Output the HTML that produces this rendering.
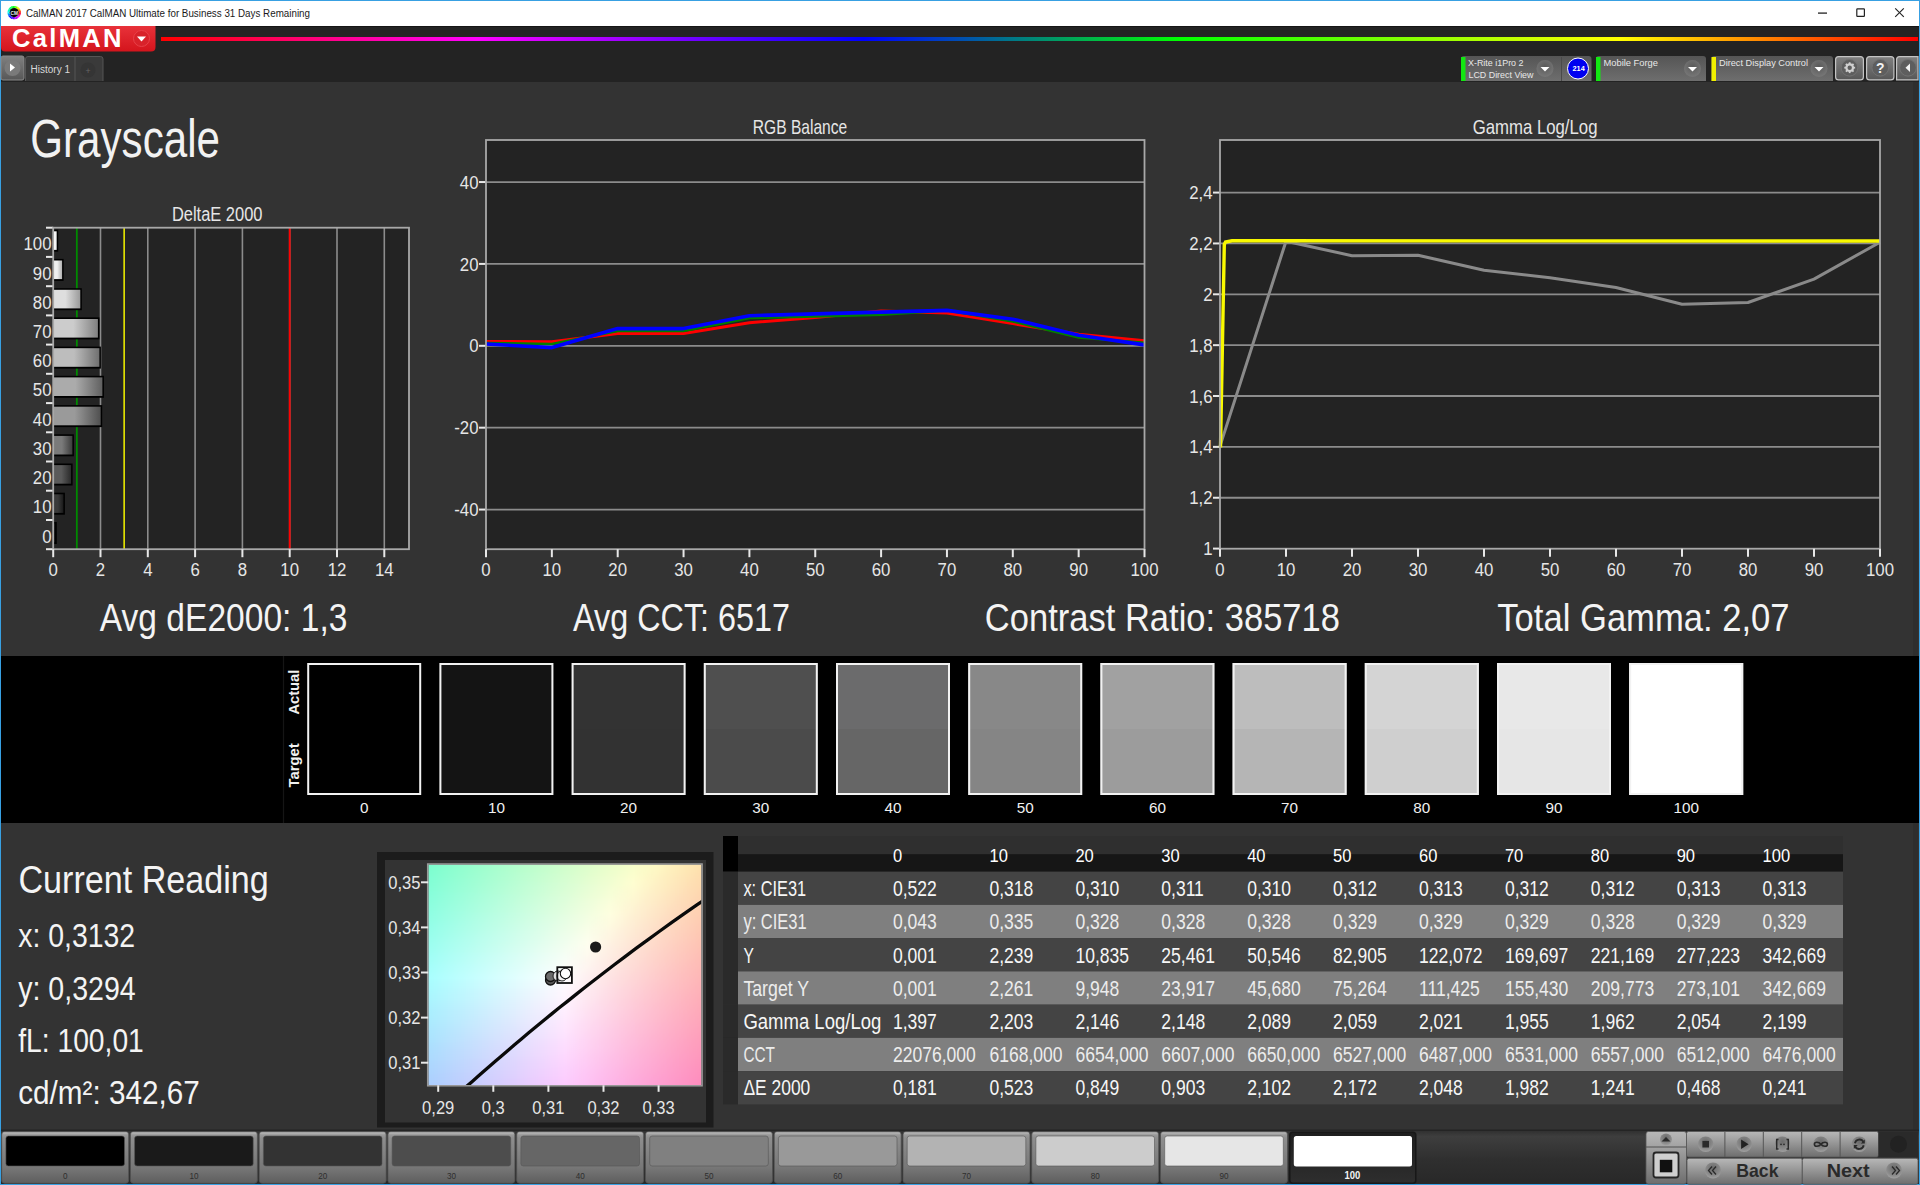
<!DOCTYPE html>
<html><head><meta charset="utf-8"><title>CalMAN Grayscale</title>
<style>
html,body{margin:0;padding:0;width:1920px;height:1185px;overflow:hidden;background:#38a0e2;}
body{position:relative;font-family:"Liberation Sans",sans-serif;}
svg text{font-family:"Liberation Sans",sans-serif;}
.b{position:absolute;box-sizing:border-box;}
</style></head><body>

<svg width="1920" height="1185" viewBox="0 0 1920 1185" style="position:absolute;left:0;top:0">
<defs>
<linearGradient id="rainbow" x1="0" y1="0" x2="1" y2="0">
 <stop offset="0" stop-color="#ff0000"/><stop offset="0.18" stop-color="#ff00ff"/>
 <stop offset="0.40" stop-color="#0000ff"/><stop offset="0.58" stop-color="#00ff00"/>
 <stop offset="0.83" stop-color="#ffff00"/><stop offset="1" stop-color="#ff0000"/>
</linearGradient>
<linearGradient id="redlogo" x1="0" y1="0" x2="0" y2="1">
 <stop offset="0" stop-color="#e8323a"/><stop offset="1" stop-color="#d4141c"/>
</linearGradient>
<linearGradient id="devbox" x1="0" y1="0" x2="0" y2="1">
 <stop offset="0" stop-color="#555"/><stop offset="1" stop-color="#6e6e6e"/>
</linearGradient>
<radialGradient id="ddcirc" cx="0.5" cy="0.4" r="0.6">
 <stop offset="0" stop-color="#5a5a5a"/><stop offset="1" stop-color="#777"/>
</radialGradient>
<linearGradient id="btn" x1="0" y1="0" x2="0" y2="1">
 <stop offset="0" stop-color="#808080"/><stop offset="1" stop-color="#575757"/>
</linearGradient>
<linearGradient id="bbtn" x1="0" y1="0" x2="0" y2="1">
 <stop offset="0" stop-color="#b4b4b4"/><stop offset="0.55" stop-color="#8c8c8c"/><stop offset="1" stop-color="#6a6a6a"/>
</linearGradient>
<linearGradient id="tbtn" x1="0" y1="0" x2="0" y2="1">
 <stop offset="0" stop-color="#b0b0b0"/><stop offset="1" stop-color="#707070"/>
</linearGradient>
<linearGradient id="bar100" x1="0" y1="0" x2="1" y2="0"><stop offset="0" stop-color="#ffffff"/><stop offset="0.45" stop-color="#ffffff"/><stop offset="1" stop-color="#e0e0e0"/></linearGradient><linearGradient id="bar90" x1="0" y1="0" x2="1" y2="0"><stop offset="0" stop-color="#f0f0f0"/><stop offset="0.45" stop-color="#f0f0f0"/><stop offset="1" stop-color="#b0b0b0"/></linearGradient><linearGradient id="bar80" x1="0" y1="0" x2="1" y2="0"><stop offset="0" stop-color="#dedede"/><stop offset="0.45" stop-color="#dedede"/><stop offset="1" stop-color="#9a9a9a"/></linearGradient><linearGradient id="bar70" x1="0" y1="0" x2="1" y2="0"><stop offset="0" stop-color="#cccccc"/><stop offset="0.45" stop-color="#cccccc"/><stop offset="1" stop-color="#808080"/></linearGradient><linearGradient id="bar60" x1="0" y1="0" x2="1" y2="0"><stop offset="0" stop-color="#bdbdbd"/><stop offset="0.45" stop-color="#bdbdbd"/><stop offset="1" stop-color="#707070"/></linearGradient><linearGradient id="bar50" x1="0" y1="0" x2="1" y2="0"><stop offset="0" stop-color="#ababab"/><stop offset="0.45" stop-color="#ababab"/><stop offset="1" stop-color="#606060"/></linearGradient><linearGradient id="bar40" x1="0" y1="0" x2="1" y2="0"><stop offset="0" stop-color="#9a9a9a"/><stop offset="0.45" stop-color="#9a9a9a"/><stop offset="1" stop-color="#505050"/></linearGradient><linearGradient id="bar30" x1="0" y1="0" x2="1" y2="0"><stop offset="0" stop-color="#7a7a7a"/><stop offset="0.45" stop-color="#7a7a7a"/><stop offset="1" stop-color="#3c3c3c"/></linearGradient><linearGradient id="bar20" x1="0" y1="0" x2="1" y2="0"><stop offset="0" stop-color="#5a5a5a"/><stop offset="0.45" stop-color="#5a5a5a"/><stop offset="1" stop-color="#2a2a2a"/></linearGradient><linearGradient id="bar10" x1="0" y1="0" x2="1" y2="0"><stop offset="0" stop-color="#3a3a3a"/><stop offset="0.45" stop-color="#3a3a3a"/><stop offset="1" stop-color="#1a1a1a"/></linearGradient><linearGradient id="bar0" x1="0" y1="0" x2="1" y2="0"><stop offset="0" stop-color="#181818"/><stop offset="0.45" stop-color="#181818"/><stop offset="1" stop-color="#000000"/></linearGradient><linearGradient id="cs0" x1="0" y1="0" x2="1" y2="0"><stop offset="0.000" stop-color="#79fecc"/><stop offset="0.083" stop-color="#87fecb"/><stop offset="0.167" stop-color="#96feca"/><stop offset="0.250" stop-color="#a4feca"/><stop offset="0.333" stop-color="#b2fec9"/><stop offset="0.417" stop-color="#c0fec9"/><stop offset="0.500" stop-color="#cdfec8"/><stop offset="0.583" stop-color="#dafec7"/><stop offset="0.667" stop-color="#e8fec7"/><stop offset="0.750" stop-color="#f5fec6"/><stop offset="0.833" stop-color="#fefcc3"/><stop offset="0.917" stop-color="#feefb7"/><stop offset="1.000" stop-color="#fee4ac"/></linearGradient><linearGradient id="cs1" x1="0" y1="0" x2="1" y2="0"><stop offset="0.000" stop-color="#7afecd"/><stop offset="0.083" stop-color="#89fecd"/><stop offset="0.167" stop-color="#98fecc"/><stop offset="0.250" stop-color="#a6fecc"/><stop offset="0.333" stop-color="#b4fecb"/><stop offset="0.417" stop-color="#c1feca"/><stop offset="0.500" stop-color="#cffeca"/><stop offset="0.583" stop-color="#dcfec9"/><stop offset="0.667" stop-color="#e9fec9"/><stop offset="0.750" stop-color="#f6fec8"/><stop offset="0.833" stop-color="#fefac3"/><stop offset="0.917" stop-color="#feeeb8"/><stop offset="1.000" stop-color="#fee2ac"/></linearGradient><linearGradient id="cs2" x1="0" y1="0" x2="1" y2="0"><stop offset="0.000" stop-color="#7cfecf"/><stop offset="0.083" stop-color="#8bfece"/><stop offset="0.167" stop-color="#99fece"/><stop offset="0.250" stop-color="#a7fecd"/><stop offset="0.333" stop-color="#b5fecd"/><stop offset="0.417" stop-color="#c3fecc"/><stop offset="0.500" stop-color="#d0fecc"/><stop offset="0.583" stop-color="#defecb"/><stop offset="0.667" stop-color="#ebfeca"/><stop offset="0.750" stop-color="#f8feca"/><stop offset="0.833" stop-color="#fef8c4"/><stop offset="0.917" stop-color="#feecb8"/><stop offset="1.000" stop-color="#fee1ad"/></linearGradient><linearGradient id="cs3" x1="0" y1="0" x2="1" y2="0"><stop offset="0.000" stop-color="#7dfed0"/><stop offset="0.083" stop-color="#8cfed0"/><stop offset="0.167" stop-color="#9bfecf"/><stop offset="0.250" stop-color="#a9fecf"/><stop offset="0.333" stop-color="#b7fece"/><stop offset="0.417" stop-color="#c4fece"/><stop offset="0.500" stop-color="#d2fecd"/><stop offset="0.583" stop-color="#dffecd"/><stop offset="0.667" stop-color="#ecfecc"/><stop offset="0.750" stop-color="#f9fecc"/><stop offset="0.833" stop-color="#fef7c4"/><stop offset="0.917" stop-color="#feebb8"/><stop offset="1.000" stop-color="#fedfad"/></linearGradient><linearGradient id="cs4" x1="0" y1="0" x2="1" y2="0"><stop offset="0.000" stop-color="#7ffed2"/><stop offset="0.083" stop-color="#8efed2"/><stop offset="0.167" stop-color="#9cfed1"/><stop offset="0.250" stop-color="#aafed1"/><stop offset="0.333" stop-color="#b8fed0"/><stop offset="0.417" stop-color="#c6fed0"/><stop offset="0.500" stop-color="#d4fecf"/><stop offset="0.583" stop-color="#e1fece"/><stop offset="0.667" stop-color="#eefece"/><stop offset="0.750" stop-color="#fbfecd"/><stop offset="0.833" stop-color="#fef5c4"/><stop offset="0.917" stop-color="#fee9b9"/><stop offset="1.000" stop-color="#feddad"/></linearGradient><linearGradient id="cs5" x1="0" y1="0" x2="1" y2="0"><stop offset="0.000" stop-color="#80fed4"/><stop offset="0.083" stop-color="#8ffed3"/><stop offset="0.167" stop-color="#9efed3"/><stop offset="0.250" stop-color="#acfed2"/><stop offset="0.333" stop-color="#bafed2"/><stop offset="0.417" stop-color="#c8fed1"/><stop offset="0.500" stop-color="#d5fed1"/><stop offset="0.583" stop-color="#e3fed0"/><stop offset="0.667" stop-color="#f0fed0"/><stop offset="0.750" stop-color="#fdfecf"/><stop offset="0.833" stop-color="#fef3c4"/><stop offset="0.917" stop-color="#fee7b9"/><stop offset="1.000" stop-color="#fedcae"/></linearGradient><linearGradient id="cs6" x1="0" y1="0" x2="1" y2="0"><stop offset="0.000" stop-color="#82fed5"/><stop offset="0.083" stop-color="#91fed5"/><stop offset="0.167" stop-color="#9ffed4"/><stop offset="0.250" stop-color="#adfed4"/><stop offset="0.333" stop-color="#bbfed4"/><stop offset="0.417" stop-color="#c9fed3"/><stop offset="0.500" stop-color="#d7fed3"/><stop offset="0.583" stop-color="#e4fed2"/><stop offset="0.667" stop-color="#f1fed2"/><stop offset="0.750" stop-color="#fefed1"/><stop offset="0.833" stop-color="#fef2c5"/><stop offset="0.917" stop-color="#fee6b9"/><stop offset="1.000" stop-color="#fedaae"/></linearGradient><linearGradient id="cs7" x1="0" y1="0" x2="1" y2="0"><stop offset="0.000" stop-color="#83fed7"/><stop offset="0.083" stop-color="#92fed7"/><stop offset="0.167" stop-color="#a1fed6"/><stop offset="0.250" stop-color="#affed6"/><stop offset="0.333" stop-color="#bdfed5"/><stop offset="0.417" stop-color="#cbfed5"/><stop offset="0.500" stop-color="#d8fed4"/><stop offset="0.583" stop-color="#e6fed4"/><stop offset="0.667" stop-color="#f3fed3"/><stop offset="0.750" stop-color="#fefdd1"/><stop offset="0.833" stop-color="#fef0c5"/><stop offset="0.917" stop-color="#fee4b9"/><stop offset="1.000" stop-color="#fed9ae"/></linearGradient><linearGradient id="cs8" x1="0" y1="0" x2="1" y2="0"><stop offset="0.000" stop-color="#85fed9"/><stop offset="0.083" stop-color="#94fed8"/><stop offset="0.167" stop-color="#a2fed8"/><stop offset="0.250" stop-color="#b1fed7"/><stop offset="0.333" stop-color="#bffed7"/><stop offset="0.417" stop-color="#ccfed7"/><stop offset="0.500" stop-color="#dafed6"/><stop offset="0.583" stop-color="#e7fed6"/><stop offset="0.667" stop-color="#f5fed5"/><stop offset="0.750" stop-color="#fefbd2"/><stop offset="0.833" stop-color="#feefc5"/><stop offset="0.917" stop-color="#fee3ba"/><stop offset="1.000" stop-color="#fed7af"/></linearGradient><linearGradient id="cs9" x1="0" y1="0" x2="1" y2="0"><stop offset="0.000" stop-color="#86feda"/><stop offset="0.083" stop-color="#95feda"/><stop offset="0.167" stop-color="#a4feda"/><stop offset="0.250" stop-color="#b2fed9"/><stop offset="0.333" stop-color="#c0fed9"/><stop offset="0.417" stop-color="#cefed8"/><stop offset="0.500" stop-color="#dcfed8"/><stop offset="0.583" stop-color="#e9fed7"/><stop offset="0.667" stop-color="#f6fed7"/><stop offset="0.750" stop-color="#fef9d2"/><stop offset="0.833" stop-color="#feedc6"/><stop offset="0.917" stop-color="#fee1ba"/><stop offset="1.000" stop-color="#fed6af"/></linearGradient><linearGradient id="cs10" x1="0" y1="0" x2="1" y2="0"><stop offset="0.000" stop-color="#88fedc"/><stop offset="0.083" stop-color="#97fedc"/><stop offset="0.167" stop-color="#a6fedb"/><stop offset="0.250" stop-color="#b4fedb"/><stop offset="0.333" stop-color="#c2feda"/><stop offset="0.417" stop-color="#d0feda"/><stop offset="0.500" stop-color="#ddfeda"/><stop offset="0.583" stop-color="#ebfed9"/><stop offset="0.667" stop-color="#f8fed9"/><stop offset="0.750" stop-color="#fef8d2"/><stop offset="0.833" stop-color="#feebc6"/><stop offset="0.917" stop-color="#fedfba"/><stop offset="1.000" stop-color="#fed4af"/></linearGradient><linearGradient id="cs11" x1="0" y1="0" x2="1" y2="0"><stop offset="0.000" stop-color="#8afede"/><stop offset="0.083" stop-color="#98fedd"/><stop offset="0.167" stop-color="#a7fedd"/><stop offset="0.250" stop-color="#b5fedd"/><stop offset="0.333" stop-color="#c4fedc"/><stop offset="0.417" stop-color="#d1fedc"/><stop offset="0.500" stop-color="#dffedb"/><stop offset="0.583" stop-color="#edfedb"/><stop offset="0.667" stop-color="#fafedb"/><stop offset="0.750" stop-color="#fef6d2"/><stop offset="0.833" stop-color="#feeac6"/><stop offset="0.917" stop-color="#fedebb"/><stop offset="1.000" stop-color="#fed3b0"/></linearGradient><linearGradient id="cs12" x1="0" y1="0" x2="1" y2="0"><stop offset="0.000" stop-color="#8bfedf"/><stop offset="0.083" stop-color="#9afedf"/><stop offset="0.167" stop-color="#a9fedf"/><stop offset="0.250" stop-color="#b7fede"/><stop offset="0.333" stop-color="#c5fede"/><stop offset="0.417" stop-color="#d3fede"/><stop offset="0.500" stop-color="#e1fedd"/><stop offset="0.583" stop-color="#eefedd"/><stop offset="0.667" stop-color="#fcfedc"/><stop offset="0.750" stop-color="#fef4d3"/><stop offset="0.833" stop-color="#fee8c7"/><stop offset="0.917" stop-color="#fedcbb"/><stop offset="1.000" stop-color="#fed1b0"/></linearGradient><linearGradient id="cs13" x1="0" y1="0" x2="1" y2="0"><stop offset="0.000" stop-color="#8dfee1"/><stop offset="0.083" stop-color="#9cfee1"/><stop offset="0.167" stop-color="#aafee0"/><stop offset="0.250" stop-color="#b9fee0"/><stop offset="0.333" stop-color="#c7fee0"/><stop offset="0.417" stop-color="#d5fedf"/><stop offset="0.500" stop-color="#e2fedf"/><stop offset="0.583" stop-color="#f0fedf"/><stop offset="0.667" stop-color="#fdfede"/><stop offset="0.750" stop-color="#fef3d3"/><stop offset="0.833" stop-color="#fee6c7"/><stop offset="0.917" stop-color="#fedbbb"/><stop offset="1.000" stop-color="#fecfb1"/></linearGradient><linearGradient id="cs14" x1="0" y1="0" x2="1" y2="0"><stop offset="0.000" stop-color="#8efee3"/><stop offset="0.083" stop-color="#9dfee2"/><stop offset="0.167" stop-color="#acfee2"/><stop offset="0.250" stop-color="#bafee2"/><stop offset="0.333" stop-color="#c8fee2"/><stop offset="0.417" stop-color="#d6fee1"/><stop offset="0.500" stop-color="#e4fee1"/><stop offset="0.583" stop-color="#f2fee1"/><stop offset="0.667" stop-color="#fefee0"/><stop offset="0.750" stop-color="#fef1d3"/><stop offset="0.833" stop-color="#fee5c7"/><stop offset="0.917" stop-color="#fed9bc"/><stop offset="1.000" stop-color="#feceb1"/></linearGradient><linearGradient id="cs15" x1="0" y1="0" x2="1" y2="0"><stop offset="0.000" stop-color="#90fee4"/><stop offset="0.083" stop-color="#9ffee4"/><stop offset="0.167" stop-color="#aefee4"/><stop offset="0.250" stop-color="#bcfee4"/><stop offset="0.333" stop-color="#cafee3"/><stop offset="0.417" stop-color="#d8fee3"/><stop offset="0.500" stop-color="#e6fee3"/><stop offset="0.583" stop-color="#f3fee2"/><stop offset="0.667" stop-color="#fefce0"/><stop offset="0.750" stop-color="#feefd3"/><stop offset="0.833" stop-color="#fee3c7"/><stop offset="0.917" stop-color="#fed7bc"/><stop offset="1.000" stop-color="#feccb1"/></linearGradient><linearGradient id="cs16" x1="0" y1="0" x2="1" y2="0"><stop offset="0.000" stop-color="#91fee6"/><stop offset="0.083" stop-color="#a0fee6"/><stop offset="0.167" stop-color="#affee6"/><stop offset="0.250" stop-color="#befee5"/><stop offset="0.333" stop-color="#ccfee5"/><stop offset="0.417" stop-color="#dafee5"/><stop offset="0.500" stop-color="#e7fee5"/><stop offset="0.583" stop-color="#f5fee4"/><stop offset="0.667" stop-color="#fefbe0"/><stop offset="0.750" stop-color="#feeed4"/><stop offset="0.833" stop-color="#fee1c8"/><stop offset="0.917" stop-color="#fed6bc"/><stop offset="1.000" stop-color="#fecbb2"/></linearGradient><linearGradient id="cs17" x1="0" y1="0" x2="1" y2="0"><stop offset="0.000" stop-color="#93fee8"/><stop offset="0.083" stop-color="#a2fee8"/><stop offset="0.167" stop-color="#b1fee7"/><stop offset="0.250" stop-color="#bffee7"/><stop offset="0.333" stop-color="#cdfee7"/><stop offset="0.417" stop-color="#dbfee7"/><stop offset="0.500" stop-color="#e9fee6"/><stop offset="0.583" stop-color="#f7fee6"/><stop offset="0.667" stop-color="#fef9e0"/><stop offset="0.750" stop-color="#feecd4"/><stop offset="0.833" stop-color="#fee0c8"/><stop offset="0.917" stop-color="#fed4bd"/><stop offset="1.000" stop-color="#fec9b2"/></linearGradient><linearGradient id="cs18" x1="0" y1="0" x2="1" y2="0"><stop offset="0.000" stop-color="#95feea"/><stop offset="0.083" stop-color="#a4fee9"/><stop offset="0.167" stop-color="#b2fee9"/><stop offset="0.250" stop-color="#c1fee9"/><stop offset="0.333" stop-color="#cffee9"/><stop offset="0.417" stop-color="#ddfee9"/><stop offset="0.500" stop-color="#ebfee8"/><stop offset="0.583" stop-color="#f9fee8"/><stop offset="0.667" stop-color="#fef7e1"/><stop offset="0.750" stop-color="#feead4"/><stop offset="0.833" stop-color="#fedec8"/><stop offset="0.917" stop-color="#fed3bd"/><stop offset="1.000" stop-color="#fec8b2"/></linearGradient><linearGradient id="cs19" x1="0" y1="0" x2="1" y2="0"><stop offset="0.000" stop-color="#96feeb"/><stop offset="0.083" stop-color="#a5feeb"/><stop offset="0.167" stop-color="#b4feeb"/><stop offset="0.250" stop-color="#c3feeb"/><stop offset="0.333" stop-color="#d1feeb"/><stop offset="0.417" stop-color="#dffeea"/><stop offset="0.500" stop-color="#edfeea"/><stop offset="0.583" stop-color="#fafeea"/><stop offset="0.667" stop-color="#fef5e1"/><stop offset="0.750" stop-color="#fee9d4"/><stop offset="0.833" stop-color="#feddc9"/><stop offset="0.917" stop-color="#fed1bd"/><stop offset="1.000" stop-color="#fec6b2"/></linearGradient><linearGradient id="cs20" x1="0" y1="0" x2="1" y2="0"><stop offset="0.000" stop-color="#98feed"/><stop offset="0.083" stop-color="#a7feed"/><stop offset="0.167" stop-color="#b6feed"/><stop offset="0.250" stop-color="#c4feed"/><stop offset="0.333" stop-color="#d2feec"/><stop offset="0.417" stop-color="#e0feec"/><stop offset="0.500" stop-color="#eefeec"/><stop offset="0.583" stop-color="#fcfeec"/><stop offset="0.667" stop-color="#fef4e1"/><stop offset="0.750" stop-color="#fee7d5"/><stop offset="0.833" stop-color="#fedbc9"/><stop offset="0.917" stop-color="#fed0be"/><stop offset="1.000" stop-color="#fec5b3"/></linearGradient><linearGradient id="cs21" x1="0" y1="0" x2="1" y2="0"><stop offset="0.000" stop-color="#9afeef"/><stop offset="0.083" stop-color="#a9feef"/><stop offset="0.167" stop-color="#b7feef"/><stop offset="0.250" stop-color="#c6feee"/><stop offset="0.333" stop-color="#d4feee"/><stop offset="0.417" stop-color="#e2feee"/><stop offset="0.500" stop-color="#f0feee"/><stop offset="0.583" stop-color="#fefeee"/><stop offset="0.667" stop-color="#fef2e1"/><stop offset="0.750" stop-color="#fee5d5"/><stop offset="0.833" stop-color="#fed9c9"/><stop offset="0.917" stop-color="#fecebe"/><stop offset="1.000" stop-color="#fec3b3"/></linearGradient><linearGradient id="cs22" x1="0" y1="0" x2="1" y2="0"><stop offset="0.000" stop-color="#9bfef1"/><stop offset="0.083" stop-color="#aafef1"/><stop offset="0.167" stop-color="#b9fef0"/><stop offset="0.250" stop-color="#c8fef0"/><stop offset="0.333" stop-color="#d6fef0"/><stop offset="0.417" stop-color="#e4fef0"/><stop offset="0.500" stop-color="#f2fef0"/><stop offset="0.583" stop-color="#fefdef"/><stop offset="0.667" stop-color="#fef0e2"/><stop offset="0.750" stop-color="#fee4d5"/><stop offset="0.833" stop-color="#fed8c9"/><stop offset="0.917" stop-color="#feccbe"/><stop offset="1.000" stop-color="#fec2b3"/></linearGradient><linearGradient id="cs23" x1="0" y1="0" x2="1" y2="0"><stop offset="0.000" stop-color="#9dfef2"/><stop offset="0.083" stop-color="#acfef2"/><stop offset="0.167" stop-color="#bbfef2"/><stop offset="0.250" stop-color="#c9fef2"/><stop offset="0.333" stop-color="#d8fef2"/><stop offset="0.417" stop-color="#e6fef2"/><stop offset="0.500" stop-color="#f4fef2"/><stop offset="0.583" stop-color="#fefcef"/><stop offset="0.667" stop-color="#feeee2"/><stop offset="0.750" stop-color="#fee2d5"/><stop offset="0.833" stop-color="#fed6ca"/><stop offset="0.917" stop-color="#fecbbe"/><stop offset="1.000" stop-color="#fec0b4"/></linearGradient><linearGradient id="cs24" x1="0" y1="0" x2="1" y2="0"><stop offset="0.000" stop-color="#9efef4"/><stop offset="0.083" stop-color="#aefef4"/><stop offset="0.167" stop-color="#bcfef4"/><stop offset="0.250" stop-color="#cbfef4"/><stop offset="0.333" stop-color="#d9fef4"/><stop offset="0.417" stop-color="#e7fef4"/><stop offset="0.500" stop-color="#f5fef4"/><stop offset="0.583" stop-color="#fefaef"/><stop offset="0.667" stop-color="#feede2"/><stop offset="0.750" stop-color="#fee0d6"/><stop offset="0.833" stop-color="#fed4ca"/><stop offset="0.917" stop-color="#fec9bf"/><stop offset="1.000" stop-color="#febeb4"/></linearGradient><linearGradient id="cs25" x1="0" y1="0" x2="1" y2="0"><stop offset="0.000" stop-color="#a0fef6"/><stop offset="0.083" stop-color="#affef6"/><stop offset="0.167" stop-color="#befef6"/><stop offset="0.250" stop-color="#cdfef6"/><stop offset="0.333" stop-color="#dbfef6"/><stop offset="0.417" stop-color="#e9fef6"/><stop offset="0.500" stop-color="#f7fef6"/><stop offset="0.583" stop-color="#fef8ef"/><stop offset="0.667" stop-color="#feebe2"/><stop offset="0.750" stop-color="#fedfd6"/><stop offset="0.833" stop-color="#fed3ca"/><stop offset="0.917" stop-color="#fec8bf"/><stop offset="1.000" stop-color="#febdb4"/></linearGradient><linearGradient id="cs26" x1="0" y1="0" x2="1" y2="0"><stop offset="0.000" stop-color="#a2fef8"/><stop offset="0.083" stop-color="#b1fef8"/><stop offset="0.167" stop-color="#c0fef8"/><stop offset="0.250" stop-color="#cefef8"/><stop offset="0.333" stop-color="#ddfef8"/><stop offset="0.417" stop-color="#ebfef7"/><stop offset="0.500" stop-color="#f9fef7"/><stop offset="0.583" stop-color="#fef6ef"/><stop offset="0.667" stop-color="#fee9e2"/><stop offset="0.750" stop-color="#feddd6"/><stop offset="0.833" stop-color="#fed1ca"/><stop offset="0.917" stop-color="#fec6bf"/><stop offset="1.000" stop-color="#febbb5"/></linearGradient><linearGradient id="cs27" x1="0" y1="0" x2="1" y2="0"><stop offset="0.000" stop-color="#a3fefa"/><stop offset="0.083" stop-color="#b3fefa"/><stop offset="0.167" stop-color="#c1fefa"/><stop offset="0.250" stop-color="#d0fef9"/><stop offset="0.333" stop-color="#defef9"/><stop offset="0.417" stop-color="#edfef9"/><stop offset="0.500" stop-color="#fbfef9"/><stop offset="0.583" stop-color="#fef5f0"/><stop offset="0.667" stop-color="#fee8e3"/><stop offset="0.750" stop-color="#fedbd6"/><stop offset="0.833" stop-color="#fed0cb"/><stop offset="0.917" stop-color="#fec4c0"/><stop offset="1.000" stop-color="#febab5"/></linearGradient><linearGradient id="cs28" x1="0" y1="0" x2="1" y2="0"><stop offset="0.000" stop-color="#a5fefb"/><stop offset="0.083" stop-color="#b4fefb"/><stop offset="0.167" stop-color="#c3fefb"/><stop offset="0.250" stop-color="#d2fefb"/><stop offset="0.333" stop-color="#e0fefb"/><stop offset="0.417" stop-color="#eefefb"/><stop offset="0.500" stop-color="#fcfefb"/><stop offset="0.583" stop-color="#fef3f0"/><stop offset="0.667" stop-color="#fee6e3"/><stop offset="0.750" stop-color="#fedad7"/><stop offset="0.833" stop-color="#fececb"/><stop offset="0.917" stop-color="#fec3c0"/><stop offset="1.000" stop-color="#feb8b5"/></linearGradient><linearGradient id="cs29" x1="0" y1="0" x2="1" y2="0"><stop offset="0.000" stop-color="#a7fefd"/><stop offset="0.083" stop-color="#b6fefd"/><stop offset="0.167" stop-color="#c5fefd"/><stop offset="0.250" stop-color="#d4fefd"/><stop offset="0.333" stop-color="#e2fefd"/><stop offset="0.417" stop-color="#f0fefd"/><stop offset="0.500" stop-color="#fefefd"/><stop offset="0.583" stop-color="#fef1f0"/><stop offset="0.667" stop-color="#fee4e3"/><stop offset="0.750" stop-color="#fed8d7"/><stop offset="0.833" stop-color="#fecccb"/><stop offset="0.917" stop-color="#fec1c0"/><stop offset="1.000" stop-color="#feb7b6"/></linearGradient><linearGradient id="cs30" x1="0" y1="0" x2="1" y2="0"><stop offset="0.000" stop-color="#a8fefe"/><stop offset="0.083" stop-color="#b7fefe"/><stop offset="0.167" stop-color="#c6fefe"/><stop offset="0.250" stop-color="#d5fefe"/><stop offset="0.333" stop-color="#e3fefe"/><stop offset="0.417" stop-color="#f1fefe"/><stop offset="0.500" stop-color="#fefdfe"/><stop offset="0.583" stop-color="#feeff0"/><stop offset="0.667" stop-color="#fee2e3"/><stop offset="0.750" stop-color="#fed6d7"/><stop offset="0.833" stop-color="#fecbcc"/><stop offset="0.917" stop-color="#fec0c1"/><stop offset="1.000" stop-color="#feb5b6"/></linearGradient><linearGradient id="cs31" x1="0" y1="0" x2="1" y2="0"><stop offset="0.000" stop-color="#a8fcfe"/><stop offset="0.083" stop-color="#b7fcfe"/><stop offset="0.167" stop-color="#c6fcfe"/><stop offset="0.250" stop-color="#d5fcfe"/><stop offset="0.333" stop-color="#e3fcfe"/><stop offset="0.417" stop-color="#f1fcfe"/><stop offset="0.500" stop-color="#fefbfe"/><stop offset="0.583" stop-color="#feeef0"/><stop offset="0.667" stop-color="#fee1e3"/><stop offset="0.750" stop-color="#fed5d7"/><stop offset="0.833" stop-color="#fec9cc"/><stop offset="0.917" stop-color="#febec1"/><stop offset="1.000" stop-color="#feb4b6"/></linearGradient><linearGradient id="cs32" x1="0" y1="0" x2="1" y2="0"><stop offset="0.000" stop-color="#a8fafe"/><stop offset="0.083" stop-color="#b7fafe"/><stop offset="0.167" stop-color="#c6fafe"/><stop offset="0.250" stop-color="#d5fafe"/><stop offset="0.333" stop-color="#e3fafe"/><stop offset="0.417" stop-color="#f1fafe"/><stop offset="0.500" stop-color="#fef9fe"/><stop offset="0.583" stop-color="#feecf0"/><stop offset="0.667" stop-color="#fedfe4"/><stop offset="0.750" stop-color="#fed3d8"/><stop offset="0.833" stop-color="#fec7cc"/><stop offset="0.917" stop-color="#febdc1"/><stop offset="1.000" stop-color="#feb2b7"/></linearGradient><linearGradient id="cs33" x1="0" y1="0" x2="1" y2="0"><stop offset="0.000" stop-color="#a8f9fe"/><stop offset="0.083" stop-color="#b7f8fe"/><stop offset="0.167" stop-color="#c6f8fe"/><stop offset="0.250" stop-color="#d5f8fe"/><stop offset="0.333" stop-color="#e3f8fe"/><stop offset="0.417" stop-color="#f1f8fe"/><stop offset="0.500" stop-color="#fef7fe"/><stop offset="0.583" stop-color="#feeaf1"/><stop offset="0.667" stop-color="#fedde4"/><stop offset="0.750" stop-color="#fed1d8"/><stop offset="0.833" stop-color="#fec6cc"/><stop offset="0.917" stop-color="#febbc1"/><stop offset="1.000" stop-color="#feb1b7"/></linearGradient><linearGradient id="cs34" x1="0" y1="0" x2="1" y2="0"><stop offset="0.000" stop-color="#a9f7fe"/><stop offset="0.083" stop-color="#b8f7fe"/><stop offset="0.167" stop-color="#c6f6fe"/><stop offset="0.250" stop-color="#d5f6fe"/><stop offset="0.333" stop-color="#e3f6fe"/><stop offset="0.417" stop-color="#f1f6fe"/><stop offset="0.500" stop-color="#fef6fe"/><stop offset="0.583" stop-color="#fee8f1"/><stop offset="0.667" stop-color="#fedce4"/><stop offset="0.750" stop-color="#fed0d8"/><stop offset="0.833" stop-color="#fec4cd"/><stop offset="0.917" stop-color="#feb9c2"/><stop offset="1.000" stop-color="#feafb7"/></linearGradient><linearGradient id="cs35" x1="0" y1="0" x2="1" y2="0"><stop offset="0.000" stop-color="#a9f5fe"/><stop offset="0.083" stop-color="#b8f5fe"/><stop offset="0.167" stop-color="#c6f5fe"/><stop offset="0.250" stop-color="#d5f4fe"/><stop offset="0.333" stop-color="#e3f4fe"/><stop offset="0.417" stop-color="#f1f4fe"/><stop offset="0.500" stop-color="#fef4fe"/><stop offset="0.583" stop-color="#fee7f1"/><stop offset="0.667" stop-color="#fedae4"/><stop offset="0.750" stop-color="#feced8"/><stop offset="0.833" stop-color="#fec3cd"/><stop offset="0.917" stop-color="#feb8c2"/><stop offset="1.000" stop-color="#feadb7"/></linearGradient><linearGradient id="cs36" x1="0" y1="0" x2="1" y2="0"><stop offset="0.000" stop-color="#a9f3fe"/><stop offset="0.083" stop-color="#b8f3fe"/><stop offset="0.167" stop-color="#c6f3fe"/><stop offset="0.250" stop-color="#d5f3fe"/><stop offset="0.333" stop-color="#e3f2fe"/><stop offset="0.417" stop-color="#f1f2fe"/><stop offset="0.500" stop-color="#fef2fe"/><stop offset="0.583" stop-color="#fee5f1"/><stop offset="0.667" stop-color="#fed8e4"/><stop offset="0.750" stop-color="#feccd8"/><stop offset="0.833" stop-color="#fec1cd"/><stop offset="0.917" stop-color="#feb6c2"/><stop offset="1.000" stop-color="#feacb8"/></linearGradient><linearGradient id="cs37" x1="0" y1="0" x2="1" y2="0"><stop offset="0.000" stop-color="#a9f1fe"/><stop offset="0.083" stop-color="#b8f1fe"/><stop offset="0.167" stop-color="#c6f1fe"/><stop offset="0.250" stop-color="#d5f1fe"/><stop offset="0.333" stop-color="#e3f1fe"/><stop offset="0.417" stop-color="#f1f0fe"/><stop offset="0.500" stop-color="#fef0fe"/><stop offset="0.583" stop-color="#fee3f1"/><stop offset="0.667" stop-color="#fed7e5"/><stop offset="0.750" stop-color="#fecbd9"/><stop offset="0.833" stop-color="#febfcd"/><stop offset="0.917" stop-color="#feb5c2"/><stop offset="1.000" stop-color="#feaab8"/></linearGradient><linearGradient id="cs38" x1="0" y1="0" x2="1" y2="0"><stop offset="0.000" stop-color="#a9effe"/><stop offset="0.083" stop-color="#b8effe"/><stop offset="0.167" stop-color="#c6effe"/><stop offset="0.250" stop-color="#d5effe"/><stop offset="0.333" stop-color="#e3effe"/><stop offset="0.417" stop-color="#f1eefe"/><stop offset="0.500" stop-color="#feeefe"/><stop offset="0.583" stop-color="#fee1f1"/><stop offset="0.667" stop-color="#fed5e5"/><stop offset="0.750" stop-color="#fec9d9"/><stop offset="0.833" stop-color="#febece"/><stop offset="0.917" stop-color="#feb3c3"/><stop offset="1.000" stop-color="#fea9b8"/></linearGradient><linearGradient id="cs39" x1="0" y1="0" x2="1" y2="0"><stop offset="0.000" stop-color="#a9eefe"/><stop offset="0.083" stop-color="#b8edfe"/><stop offset="0.167" stop-color="#c6edfe"/><stop offset="0.250" stop-color="#d5edfe"/><stop offset="0.333" stop-color="#e3edfe"/><stop offset="0.417" stop-color="#f0ecfe"/><stop offset="0.500" stop-color="#feecfe"/><stop offset="0.583" stop-color="#fee0f2"/><stop offset="0.667" stop-color="#fed3e5"/><stop offset="0.750" stop-color="#fec7d9"/><stop offset="0.833" stop-color="#febcce"/><stop offset="0.917" stop-color="#feb1c3"/><stop offset="1.000" stop-color="#fea7b9"/></linearGradient><linearGradient id="cs40" x1="0" y1="0" x2="1" y2="0"><stop offset="0.000" stop-color="#a9ecfe"/><stop offset="0.083" stop-color="#b8ecfe"/><stop offset="0.167" stop-color="#c6ebfe"/><stop offset="0.250" stop-color="#d5ebfe"/><stop offset="0.333" stop-color="#e3ebfe"/><stop offset="0.417" stop-color="#f0ebfe"/><stop offset="0.500" stop-color="#feeafe"/><stop offset="0.583" stop-color="#fedef2"/><stop offset="0.667" stop-color="#fed1e5"/><stop offset="0.750" stop-color="#fec6d9"/><stop offset="0.833" stop-color="#febbce"/><stop offset="0.917" stop-color="#feb0c3"/><stop offset="1.000" stop-color="#fea6b9"/></linearGradient><linearGradient id="cs41" x1="0" y1="0" x2="1" y2="0"><stop offset="0.000" stop-color="#aaeafe"/><stop offset="0.083" stop-color="#b8eafe"/><stop offset="0.167" stop-color="#c7eafe"/><stop offset="0.250" stop-color="#d5e9fe"/><stop offset="0.333" stop-color="#e3e9fe"/><stop offset="0.417" stop-color="#f0e9fe"/><stop offset="0.500" stop-color="#fee8fe"/><stop offset="0.583" stop-color="#fedcf2"/><stop offset="0.667" stop-color="#fed0e5"/><stop offset="0.750" stop-color="#fec4da"/><stop offset="0.833" stop-color="#feb9ce"/><stop offset="0.917" stop-color="#feaec4"/><stop offset="1.000" stop-color="#fea4b9"/></linearGradient><linearGradient id="cs42" x1="0" y1="0" x2="1" y2="0"><stop offset="0.000" stop-color="#aae8fe"/><stop offset="0.083" stop-color="#b8e8fe"/><stop offset="0.167" stop-color="#c7e8fe"/><stop offset="0.250" stop-color="#d5e7fe"/><stop offset="0.333" stop-color="#e2e7fe"/><stop offset="0.417" stop-color="#f0e7fe"/><stop offset="0.500" stop-color="#fee6fe"/><stop offset="0.583" stop-color="#fedaf2"/><stop offset="0.667" stop-color="#fecee6"/><stop offset="0.750" stop-color="#fec2da"/><stop offset="0.833" stop-color="#feb7cf"/><stop offset="0.917" stop-color="#feadc4"/><stop offset="1.000" stop-color="#fea3ba"/></linearGradient><linearGradient id="cs43" x1="0" y1="0" x2="1" y2="0"><stop offset="0.000" stop-color="#aae6fe"/><stop offset="0.083" stop-color="#b8e6fe"/><stop offset="0.167" stop-color="#c7e6fe"/><stop offset="0.250" stop-color="#d5e6fe"/><stop offset="0.333" stop-color="#e2e5fe"/><stop offset="0.417" stop-color="#f0e5fe"/><stop offset="0.500" stop-color="#fee5fe"/><stop offset="0.583" stop-color="#fed9f2"/><stop offset="0.667" stop-color="#fecce6"/><stop offset="0.750" stop-color="#fec1da"/><stop offset="0.833" stop-color="#feb6cf"/><stop offset="0.917" stop-color="#feabc4"/><stop offset="1.000" stop-color="#fea1ba"/></linearGradient><linearGradient id="cs44" x1="0" y1="0" x2="1" y2="0"><stop offset="0.000" stop-color="#aae5fe"/><stop offset="0.083" stop-color="#b8e4fe"/><stop offset="0.167" stop-color="#c7e4fe"/><stop offset="0.250" stop-color="#d5e4fe"/><stop offset="0.333" stop-color="#e2e3fe"/><stop offset="0.417" stop-color="#f0e3fe"/><stop offset="0.500" stop-color="#fde3fe"/><stop offset="0.583" stop-color="#fed7f2"/><stop offset="0.667" stop-color="#fecbe6"/><stop offset="0.750" stop-color="#febfda"/><stop offset="0.833" stop-color="#feb4cf"/><stop offset="0.917" stop-color="#feaac4"/><stop offset="1.000" stop-color="#fe9fba"/></linearGradient><linearGradient id="cs45" x1="0" y1="0" x2="1" y2="0"><stop offset="0.000" stop-color="#aae3fe"/><stop offset="0.083" stop-color="#b9e3fe"/><stop offset="0.167" stop-color="#c7e2fe"/><stop offset="0.250" stop-color="#d5e2fe"/><stop offset="0.333" stop-color="#e2e1fe"/><stop offset="0.417" stop-color="#f0e1fe"/><stop offset="0.500" stop-color="#fde1fe"/><stop offset="0.583" stop-color="#fed5f3"/><stop offset="0.667" stop-color="#fec9e6"/><stop offset="0.750" stop-color="#febddb"/><stop offset="0.833" stop-color="#feb2cf"/><stop offset="0.917" stop-color="#fea8c5"/><stop offset="1.000" stop-color="#fe9eba"/></linearGradient><linearGradient id="cs46" x1="0" y1="0" x2="1" y2="0"><stop offset="0.000" stop-color="#aae1fe"/><stop offset="0.083" stop-color="#b9e1fe"/><stop offset="0.167" stop-color="#c7e0fe"/><stop offset="0.250" stop-color="#d5e0fe"/><stop offset="0.333" stop-color="#e2e0fe"/><stop offset="0.417" stop-color="#f0dffe"/><stop offset="0.500" stop-color="#fddffe"/><stop offset="0.583" stop-color="#fed3f3"/><stop offset="0.667" stop-color="#fec7e6"/><stop offset="0.750" stop-color="#febcdb"/><stop offset="0.833" stop-color="#feb1d0"/><stop offset="0.917" stop-color="#fea6c5"/><stop offset="1.000" stop-color="#fe9cbb"/></linearGradient><linearGradient id="cs47" x1="0" y1="0" x2="1" y2="0"><stop offset="0.000" stop-color="#aadffe"/><stop offset="0.083" stop-color="#b9dffe"/><stop offset="0.167" stop-color="#c7dffe"/><stop offset="0.250" stop-color="#d5defe"/><stop offset="0.333" stop-color="#e2defe"/><stop offset="0.417" stop-color="#f0ddfe"/><stop offset="0.500" stop-color="#fdddfe"/><stop offset="0.583" stop-color="#fed2f3"/><stop offset="0.667" stop-color="#fec6e7"/><stop offset="0.750" stop-color="#febadb"/><stop offset="0.833" stop-color="#feafd0"/><stop offset="0.917" stop-color="#fea5c5"/><stop offset="1.000" stop-color="#fe9bbb"/></linearGradient><linearGradient id="cs48" x1="0" y1="0" x2="1" y2="0"><stop offset="0.000" stop-color="#aadefe"/><stop offset="0.083" stop-color="#b9ddfe"/><stop offset="0.167" stop-color="#c7ddfe"/><stop offset="0.250" stop-color="#d5dcfe"/><stop offset="0.333" stop-color="#e2dcfe"/><stop offset="0.417" stop-color="#f0dbfe"/><stop offset="0.500" stop-color="#fddbfe"/><stop offset="0.583" stop-color="#fed0f3"/><stop offset="0.667" stop-color="#fec4e7"/><stop offset="0.750" stop-color="#feb8db"/><stop offset="0.833" stop-color="#feaed0"/><stop offset="0.917" stop-color="#fea3c5"/><stop offset="1.000" stop-color="#fe99bb"/></linearGradient><linearGradient id="cs49" x1="0" y1="0" x2="1" y2="0"><stop offset="0.000" stop-color="#abdcfe"/><stop offset="0.083" stop-color="#b9dbfe"/><stop offset="0.167" stop-color="#c7dbfe"/><stop offset="0.250" stop-color="#d5dafe"/><stop offset="0.333" stop-color="#e2dafe"/><stop offset="0.417" stop-color="#f0dafe"/><stop offset="0.500" stop-color="#fdd9fe"/><stop offset="0.583" stop-color="#fecef3"/><stop offset="0.667" stop-color="#fec2e7"/><stop offset="0.750" stop-color="#feb7db"/><stop offset="0.833" stop-color="#feacd0"/><stop offset="0.917" stop-color="#fea2c6"/><stop offset="1.000" stop-color="#fe98bc"/></linearGradient><linearGradient id="cs50" x1="0" y1="0" x2="1" y2="0"><stop offset="0.000" stop-color="#abdafe"/><stop offset="0.083" stop-color="#b9dafe"/><stop offset="0.167" stop-color="#c7d9fe"/><stop offset="0.250" stop-color="#d5d9fe"/><stop offset="0.333" stop-color="#e2d8fe"/><stop offset="0.417" stop-color="#efd8fe"/><stop offset="0.500" stop-color="#fdd7fe"/><stop offset="0.583" stop-color="#feccf3"/><stop offset="0.667" stop-color="#fec0e7"/><stop offset="0.750" stop-color="#feb5dc"/><stop offset="0.833" stop-color="#feaad1"/><stop offset="0.917" stop-color="#fea0c6"/><stop offset="1.000" stop-color="#fe96bc"/></linearGradient><linearGradient id="cs51" x1="0" y1="0" x2="1" y2="0"><stop offset="0.000" stop-color="#abd8fe"/><stop offset="0.083" stop-color="#b9d8fe"/><stop offset="0.167" stop-color="#c7d7fe"/><stop offset="0.250" stop-color="#d5d7fe"/><stop offset="0.333" stop-color="#e2d6fe"/><stop offset="0.417" stop-color="#efd6fe"/><stop offset="0.500" stop-color="#fdd5fe"/><stop offset="0.583" stop-color="#fecbf4"/><stop offset="0.667" stop-color="#febfe7"/><stop offset="0.750" stop-color="#feb4dc"/><stop offset="0.833" stop-color="#fea9d1"/><stop offset="0.917" stop-color="#fe9ec6"/><stop offset="1.000" stop-color="#fe95bc"/></linearGradient><linearGradient id="cs52" x1="0" y1="0" x2="1" y2="0"><stop offset="0.000" stop-color="#abd6fe"/><stop offset="0.083" stop-color="#b9d6fe"/><stop offset="0.167" stop-color="#c7d5fe"/><stop offset="0.250" stop-color="#d5d5fe"/><stop offset="0.333" stop-color="#e2d4fe"/><stop offset="0.417" stop-color="#efd4fe"/><stop offset="0.500" stop-color="#fcd3fe"/><stop offset="0.583" stop-color="#fec9f4"/><stop offset="0.667" stop-color="#febde8"/><stop offset="0.750" stop-color="#feb2dc"/><stop offset="0.833" stop-color="#fea7d1"/><stop offset="0.917" stop-color="#fe9dc6"/><stop offset="1.000" stop-color="#fe93bc"/></linearGradient><linearGradient id="cs53" x1="0" y1="0" x2="1" y2="0"><stop offset="0.000" stop-color="#abd5fe"/><stop offset="0.083" stop-color="#b9d4fe"/><stop offset="0.167" stop-color="#c7d4fe"/><stop offset="0.250" stop-color="#d5d3fe"/><stop offset="0.333" stop-color="#e2d3fe"/><stop offset="0.417" stop-color="#efd2fe"/><stop offset="0.500" stop-color="#fcd1fe"/><stop offset="0.583" stop-color="#fec7f4"/><stop offset="0.667" stop-color="#febbe8"/><stop offset="0.750" stop-color="#feb0dc"/><stop offset="0.833" stop-color="#fea6d1"/><stop offset="0.917" stop-color="#fe9bc7"/><stop offset="1.000" stop-color="#fe91bd"/></linearGradient><linearGradient id="cs54" x1="0" y1="0" x2="1" y2="0"><stop offset="0.000" stop-color="#abd3fe"/><stop offset="0.083" stop-color="#b9d2fe"/><stop offset="0.167" stop-color="#c7d2fe"/><stop offset="0.250" stop-color="#d5d1fe"/><stop offset="0.333" stop-color="#e2d1fe"/><stop offset="0.417" stop-color="#efd0fe"/><stop offset="0.500" stop-color="#fcd0fe"/><stop offset="0.583" stop-color="#fec5f4"/><stop offset="0.667" stop-color="#febae8"/><stop offset="0.750" stop-color="#feafdc"/><stop offset="0.833" stop-color="#fea4d1"/><stop offset="0.917" stop-color="#fe9ac7"/><stop offset="1.000" stop-color="#fe90bd"/></linearGradient><linearGradient id="cs55" x1="0" y1="0" x2="1" y2="0"><stop offset="0.000" stop-color="#abd1fe"/><stop offset="0.083" stop-color="#b9d1fe"/><stop offset="0.167" stop-color="#c7d0fe"/><stop offset="0.250" stop-color="#d5cffe"/><stop offset="0.333" stop-color="#e2cffe"/><stop offset="0.417" stop-color="#efcefe"/><stop offset="0.500" stop-color="#fccefe"/><stop offset="0.583" stop-color="#fec4f4"/><stop offset="0.667" stop-color="#feb8e8"/><stop offset="0.750" stop-color="#feaddd"/><stop offset="0.833" stop-color="#fea2d2"/><stop offset="0.917" stop-color="#fe98c7"/><stop offset="1.000" stop-color="#fe8ebd"/></linearGradient><linearGradient id="cs56" x1="0" y1="0" x2="1" y2="0"><stop offset="0.000" stop-color="#abcffe"/><stop offset="0.083" stop-color="#b9cffe"/><stop offset="0.167" stop-color="#c7cefe"/><stop offset="0.250" stop-color="#d5cefe"/><stop offset="0.333" stop-color="#e2cdfe"/><stop offset="0.417" stop-color="#efccfe"/><stop offset="0.500" stop-color="#fcccfe"/><stop offset="0.583" stop-color="#fec2f4"/><stop offset="0.667" stop-color="#feb6e8"/><stop offset="0.750" stop-color="#feabdd"/><stop offset="0.833" stop-color="#fea1d2"/><stop offset="0.917" stop-color="#fe97c7"/><stop offset="1.000" stop-color="#fe8dbd"/></linearGradient><linearGradient id="cs57" x1="0" y1="0" x2="1" y2="0"><stop offset="0.000" stop-color="#accefe"/><stop offset="0.083" stop-color="#b9cdfe"/><stop offset="0.167" stop-color="#c7ccfe"/><stop offset="0.250" stop-color="#d5ccfe"/><stop offset="0.333" stop-color="#e2cbfe"/><stop offset="0.417" stop-color="#efcbfe"/><stop offset="0.500" stop-color="#fccafe"/><stop offset="0.583" stop-color="#fec0f5"/><stop offset="0.667" stop-color="#feb5e8"/><stop offset="0.750" stop-color="#feaadd"/><stop offset="0.833" stop-color="#fe9fd2"/><stop offset="0.917" stop-color="#fe95c8"/><stop offset="1.000" stop-color="#fe8bbe"/></linearGradient><linearGradient id="cs58" x1="0" y1="0" x2="1" y2="0"><stop offset="0.000" stop-color="#acccfe"/><stop offset="0.083" stop-color="#bacbfe"/><stop offset="0.167" stop-color="#c7cbfe"/><stop offset="0.250" stop-color="#d5cafe"/><stop offset="0.333" stop-color="#e2c9fe"/><stop offset="0.417" stop-color="#efc9fe"/><stop offset="0.500" stop-color="#fcc8fe"/><stop offset="0.583" stop-color="#febef5"/><stop offset="0.667" stop-color="#feb3e9"/><stop offset="0.750" stop-color="#fea8dd"/><stop offset="0.833" stop-color="#fe9dd2"/><stop offset="0.917" stop-color="#fe93c8"/><stop offset="1.000" stop-color="#fe8abe"/></linearGradient><linearGradient id="cs59" x1="0" y1="0" x2="1" y2="0"><stop offset="0.000" stop-color="#accafe"/><stop offset="0.083" stop-color="#bacafe"/><stop offset="0.167" stop-color="#c7c9fe"/><stop offset="0.250" stop-color="#d5c8fe"/><stop offset="0.333" stop-color="#e2c8fe"/><stop offset="0.417" stop-color="#efc7fe"/><stop offset="0.500" stop-color="#fcc6fe"/><stop offset="0.583" stop-color="#febdf5"/><stop offset="0.667" stop-color="#feb1e9"/><stop offset="0.750" stop-color="#fea6dd"/><stop offset="0.833" stop-color="#fe9cd3"/><stop offset="0.917" stop-color="#fe92c8"/><stop offset="1.000" stop-color="#fe88be"/></linearGradient><clipPath id="cclip"><rect x="428.2" y="864.5" width="273.40000000000003" height="220.79999999999995"/></clipPath><filter id="vblur" x="-5%" y="-5%" width="110%" height="110%"><feGaussianBlur stdDeviation="0 2.5"/></filter><linearGradient id="bb" x1="0" y1="0" x2="0" y2="1"><stop offset="0" stop-color="#a6a6a6"/><stop offset="0.12" stop-color="#8e8e8e"/><stop offset="0.7" stop-color="#777"/><stop offset="1" stop-color="#5e5e5e"/></linearGradient>
<linearGradient id="bbsel" x1="0" y1="0" x2="0" y2="1"><stop offset="0" stop-color="#1e1e1e"/><stop offset="1" stop-color="#2e2e2e"/></linearGradient>
<linearGradient id="bbar" x1="0" y1="0" x2="0" y2="1"><stop offset="0" stop-color="#2e2e2e"/><stop offset="0.12" stop-color="#3e3e3e"/><stop offset="0.55" stop-color="#2f2f2f"/><stop offset="1" stop-color="#282828"/></linearGradient>
<linearGradient id="tb" x1="0" y1="0" x2="0" y2="1"><stop offset="0" stop-color="#b8b8b8"/><stop offset="0.5" stop-color="#939393"/><stop offset="1" stop-color="#6e6e6e"/></linearGradient>
<radialGradient id="tcirc" cx="0.5" cy="0.35" r="0.65"><stop offset="0" stop-color="#6a6a6a"/><stop offset="0.7" stop-color="#8a8a8a"/><stop offset="1" stop-color="#a0a0a0"/></radialGradient>
</defs>
<rect x="1" y="1" width="1918" height="25" fill="#ffffff" />
<rect x="1" y="26" width="1918" height="56" fill="#232323" />
<rect x="1" y="26" width="1918" height="1" fill="#151515" />
<rect x="1" y="82" width="1918" height="574" fill="#333333" />
<rect x="1" y="656" width="1918" height="167" fill="#000000" />
<rect x="1" y="823" width="1918" height="307" fill="#333333" />
<rect x="1" y="1130" width="1918" height="54" fill="#2a2a2a" />
<rect x="1913" y="82" width="5" height="574" fill="#2e2e2e" />
<rect x="1913" y="823" width="5" height="307" fill="#2e2e2e" />
<path d="M14.20 7.00 A5.6 5.6 0 0 1 15.70 7.20" fill="none" stroke="#2aff00" stroke-width="2.2"/>
<path d="M15.65 7.19 A5.6 5.6 0 0 1 17.04 7.77" fill="none" stroke="#7fff00" stroke-width="2.2"/>
<path d="M17.00 7.75 A5.6 5.6 0 0 1 18.19 8.67" fill="none" stroke="#d4ff00" stroke-width="2.2"/>
<path d="M18.16 8.64 A5.6 5.6 0 0 1 19.07 9.84" fill="none" stroke="#ffd400" stroke-width="2.2"/>
<path d="M19.05 9.80 A5.6 5.6 0 0 1 19.62 11.20" fill="none" stroke="#ff7f00" stroke-width="2.2"/>
<path d="M19.61 11.15 A5.6 5.6 0 0 1 19.80 12.65" fill="none" stroke="#ff2a00" stroke-width="2.2"/>
<path d="M19.80 12.60 A5.6 5.6 0 0 1 19.60 14.10" fill="none" stroke="#ff002a" stroke-width="2.2"/>
<path d="M19.61 14.05 A5.6 5.6 0 0 1 19.03 15.44" fill="none" stroke="#ff007f" stroke-width="2.2"/>
<path d="M19.05 15.40 A5.6 5.6 0 0 1 18.13 16.59" fill="none" stroke="#ff00d4" stroke-width="2.2"/>
<path d="M18.16 16.56 A5.6 5.6 0 0 1 16.96 17.47" fill="none" stroke="#e900ff" stroke-width="2.2"/>
<path d="M17.00 17.45 A5.6 5.6 0 0 1 15.60 18.02" fill="none" stroke="#bf00ff" stroke-width="2.2"/>
<path d="M15.65 18.01 A5.6 5.6 0 0 1 14.15 18.20" fill="none" stroke="#9400ff" stroke-width="2.2"/>
<path d="M14.20 18.20 A5.6 5.6 0 0 1 12.70 18.00" fill="none" stroke="#6a00ff" stroke-width="2.2"/>
<path d="M12.75 18.01 A5.6 5.6 0 0 1 11.36 17.43" fill="none" stroke="#3f00ff" stroke-width="2.2"/>
<path d="M11.40 17.45 A5.6 5.6 0 0 1 10.21 16.53" fill="none" stroke="#1500ff" stroke-width="2.2"/>
<path d="M10.24 16.56 A5.6 5.6 0 0 1 9.33 15.36" fill="none" stroke="#002aff" stroke-width="2.2"/>
<path d="M9.35 15.40 A5.6 5.6 0 0 1 8.78 14.00" fill="none" stroke="#007fff" stroke-width="2.2"/>
<path d="M8.79 14.05 A5.6 5.6 0 0 1 8.60 12.55" fill="none" stroke="#00d4ff" stroke-width="2.2"/>
<path d="M8.60 12.60 A5.6 5.6 0 0 1 8.80 11.10" fill="none" stroke="#00ffe9" stroke-width="2.2"/>
<path d="M8.79 11.15 A5.6 5.6 0 0 1 9.37 9.76" fill="none" stroke="#00ffbf" stroke-width="2.2"/>
<path d="M9.35 9.80 A5.6 5.6 0 0 1 10.27 8.61" fill="none" stroke="#00ff94" stroke-width="2.2"/>
<path d="M10.24 8.64 A5.6 5.6 0 0 1 11.44 7.73" fill="none" stroke="#00ff6a" stroke-width="2.2"/>
<path d="M11.40 7.75 A5.6 5.6 0 0 1 12.80 7.18" fill="none" stroke="#00ff3f" stroke-width="2.2"/>
<path d="M12.75 7.19 A5.6 5.6 0 0 1 14.25 7.00" fill="none" stroke="#00ff15" stroke-width="2.2"/>
<circle cx="14.2" cy="12.6" r="4.6" fill="#050505"/>
<text x="10.60" y="14.80" font-size="5.67" fill="#f0f0f0" font-weight="bold" textLength="7.40" lengthAdjust="spacingAndGlyphs">CM</text>
<text x="26.00" y="16.90" font-size="10.90" fill="#1a1a1a" textLength="283.99" lengthAdjust="spacingAndGlyphs">CalMAN 2017 CalMAN Ultimate for Business 31 Days Remaining</text>
<line x1="1818" y1="13.1" x2="1827" y2="13.1" stroke="#222" stroke-width="1.3" />
<rect x="1856.8" y="8.8" width="7.6" height="7.6" rx="0.6" fill="none" stroke="#222" stroke-width="1.2"/>
<line x1="1895.2" y1="8.3" x2="1903.8" y2="16.9" stroke="#222" stroke-width="1.1" />
<line x1="1903.8" y1="8.3" x2="1895.2" y2="16.9" stroke="#222" stroke-width="1.1" />
<path d="M1 26 H155.5 V47 Q155.5 51.5 151 51.5 H5 Q1 51.5 1 47 Z" fill="url(#redlogo)"/>
<text x="12.00" y="47.20" font-size="25.58" fill="#ffffff" font-weight="bold" textLength="109.53" lengthAdjust="spacing">CalMAN</text>
<circle cx="141.5" cy="38.5" r="8" fill="#d8222a" stroke="#e84048" stroke-width="1"/>
<path d="M137 36.5 H146 L141.5 41.5 Z" fill="#fff"/>
<rect x="161" y="37" width="1757" height="4" fill="url(#rainbow)" />
<rect x="1" y="56" width="23" height="24" rx="2" fill="url(#btn)" stroke="#888" stroke-width="1"/>
<circle cx="12.5" cy="68" r="8" fill="#7a7a7a"/>
<path d="M10 63.5 L15 67.5 L10 71.5 Z" fill="#fff"/>
<path d="M25.5 81 V59 Q25.5 56.5 28 56.5 H100.5 Q103 56.5 103 59 V81" fill="#3a3a3a" stroke="#555" stroke-width="1"/>
<line x1="75" y1="57" x2="75" y2="81" stroke="#555" stroke-width="1" />
<text x="30.50" y="73.00" font-size="10.61" fill="#d8d8d8" textLength="39.50" lengthAdjust="spacingAndGlyphs">History 1</text>
<circle cx="88" cy="70" r="7.5" fill="#353535"/>
<text x="85.45" y="74.00" font-size="8.72" fill="#666" textLength="5.09" lengthAdjust="spacingAndGlyphs">+</text>
<path d="M1461 81 V59 Q1461 56 1464 56 H1588.5 Q1591.5 56 1591.5 59 V81 Z" fill="url(#devbox)"/>
<rect x="1461" y="57" width="4.5" height="24" fill="#12e812" />
<text x="1468.00" y="66.00" font-size="9.01" fill="#e8e8e8" textLength="55.50" lengthAdjust="spacingAndGlyphs">X-Rite i1Pro 2</text>
<text x="1468.50" y="77.80" font-size="9.01" fill="#e8e8e8" textLength="64.97" lengthAdjust="spacingAndGlyphs">LCD Direct View</text>
<circle cx="1545" cy="68.5" r="8.5" fill="url(#ddcirc)"/>
<path d="M1540.5 67.0 H1549.5 L1545 71.5 Z" fill="#fff"/>
<line x1="1561.5" y1="57" x2="1561.5" y2="81" stroke="#4a4a4a" stroke-width="1" />
<circle cx="1578" cy="68.5" r="10.5" fill="#0000f0" stroke="#fff" stroke-width="1"/>
<text x="1572.50" y="71.30" font-size="7.70" fill="#fff" font-weight="bold" textLength="12.21" lengthAdjust="spacingAndGlyphs">214</text>
<path d="M1596 81 V59 Q1596 56 1599 56 H1703 Q1706 56 1706 59 V81 Z" fill="url(#devbox)"/>
<rect x="1596" y="57" width="4.5" height="24" fill="#12e812" />
<text x="1603.50" y="65.80" font-size="9.59" fill="#e8e8e8" textLength="54.51" lengthAdjust="spacingAndGlyphs">Mobile Forge</text>
<circle cx="1692.5" cy="68.5" r="8.5" fill="url(#ddcirc)"/>
<path d="M1688.0 67.0 H1697.0 L1692.5 71.5 Z" fill="#fff"/>
<path d="M1711.5 81 V59 Q1711.5 56 1714.5 56 H1830 Q1833 56 1833 59 V81 Z" fill="url(#devbox)"/>
<rect x="1711.5" y="57" width="4.5" height="24" fill="#f0f000" />
<text x="1719.00" y="65.50" font-size="9.59" fill="#e8e8e8" textLength="89.00" lengthAdjust="spacingAndGlyphs">Direct Display Control</text>
<circle cx="1819" cy="68.5" r="8.5" fill="url(#ddcirc)"/>
<path d="M1814.5 67.0 H1823.5 L1819 71.5 Z" fill="#fff"/>
<rect x="1835.6" y="56.6" width="27.8" height="23.3" rx="3" fill="url(#btn)" stroke="#c4c4c4" stroke-width="1.2"/>
<circle cx="1849.5" cy="67.8" r="8.3" fill="#5e5e5e" stroke="#727272" stroke-width="1"/>
<g transform="translate(1849.7 67.7)"><circle r="3.3" fill="none" stroke="#d0d0d0" stroke-width="2.2"/><rect x="-0.9" y="-5.4" width="1.8" height="2.4" fill="#d0d0d0" transform="rotate(0)"/><rect x="-0.9" y="-5.4" width="1.8" height="2.4" fill="#d0d0d0" transform="rotate(45)"/><rect x="-0.9" y="-5.4" width="1.8" height="2.4" fill="#d0d0d0" transform="rotate(90)"/><rect x="-0.9" y="-5.4" width="1.8" height="2.4" fill="#d0d0d0" transform="rotate(135)"/><rect x="-0.9" y="-5.4" width="1.8" height="2.4" fill="#d0d0d0" transform="rotate(180)"/><rect x="-0.9" y="-5.4" width="1.8" height="2.4" fill="#d0d0d0" transform="rotate(225)"/><rect x="-0.9" y="-5.4" width="1.8" height="2.4" fill="#d0d0d0" transform="rotate(270)"/><rect x="-0.9" y="-5.4" width="1.8" height="2.4" fill="#d0d0d0" transform="rotate(315)"/></g>
<rect x="1866.6" y="56.6" width="27.3" height="23.3" rx="3" fill="url(#btn)" stroke="#c4c4c4" stroke-width="1.2"/>
<circle cx="1880.25" cy="67.8" r="8.3" fill="#5e5e5e" stroke="#727272" stroke-width="1"/>
<text x="1875.94" y="72.90" font-size="13.95" fill="#f4f4f4" font-weight="bold" textLength="8.52" lengthAdjust="spacingAndGlyphs">?</text>
<path d="M1896.6 79.9 V59.5 Q1896.6 56.6 1899.6 56.6 H1918 V79.9 Z" fill="url(#btn)" stroke="#c4c4c4" stroke-width="1.2"/>
<circle cx="1908" cy="67.8" r="8.3" fill="#5e5e5e" stroke="#727272" stroke-width="1"/>
<path d="M1910 63.5 L1905.5 67.8 L1910 72 Z" fill="#f4f4f4"/>
<text x="30.30" y="157.10" font-size="53.78" fill="#f2f2f2" textLength="189.66" lengthAdjust="spacingAndGlyphs">Grayscale</text>
<text x="171.90" y="220.90" font-size="19.91" fill="#e6e6e6" textLength="90.59" lengthAdjust="spacingAndGlyphs">DeltaE 2000</text>
<rect x="53.2" y="227.7" width="355.8" height="321.50000000000006" fill="#232323" />
<line x1="100.5" y1="227.7" x2="100.5" y2="549.2" stroke="#8c8c8c" stroke-width="1.6" />
<line x1="147.8" y1="227.7" x2="147.8" y2="549.2" stroke="#8c8c8c" stroke-width="1.6" />
<line x1="195.09999999999997" y1="227.7" x2="195.09999999999997" y2="549.2" stroke="#8c8c8c" stroke-width="1.6" />
<line x1="242.39999999999998" y1="227.7" x2="242.39999999999998" y2="549.2" stroke="#8c8c8c" stroke-width="1.6" />
<line x1="289.7" y1="227.7" x2="289.7" y2="549.2" stroke="#8c8c8c" stroke-width="1.6" />
<line x1="336.99999999999994" y1="227.7" x2="336.99999999999994" y2="549.2" stroke="#8c8c8c" stroke-width="1.6" />
<line x1="384.29999999999995" y1="227.7" x2="384.29999999999995" y2="549.2" stroke="#8c8c8c" stroke-width="1.6" />
<line x1="76.85" y1="227.7" x2="76.85" y2="549.2" stroke="#008a00" stroke-width="1.8" />
<line x1="124.14999999999999" y1="227.7" x2="124.14999999999999" y2="549.2" stroke="#e8e800" stroke-width="1.6" />
<line x1="289.7" y1="227.7" x2="289.7" y2="549.2" stroke="#ff0000" stroke-width="1.8" />
<rect x="53.2" y="229.7" width="5.0" height="22" fill="#000" />
<rect x="53.2" y="231.3" width="3.5" height="18.6" fill="url(#bar100)" />
<line x1="46" y1="227.7" x2="53.2" y2="227.7" stroke="#e8e8e8" stroke-width="2" />
<text x="23.51" y="250.31" font-size="19.19" fill="#e6e6e6" textLength="28.01" lengthAdjust="spacingAndGlyphs">100</text>
<rect x="53.2" y="258.9" width="10.4" height="22" fill="#000" />
<rect x="53.2" y="260.5" width="8.9" height="18.6" fill="url(#bar90)" />
<line x1="46" y1="256.9" x2="53.2" y2="256.9" stroke="#e8e8e8" stroke-width="2" />
<text x="32.82" y="279.54" font-size="19.19" fill="#e6e6e6" textLength="18.67" lengthAdjust="spacingAndGlyphs">90</text>
<rect x="53.2" y="288.2" width="28.6" height="22" fill="#000" />
<rect x="53.2" y="289.8" width="27.1" height="18.6" fill="url(#bar80)" />
<line x1="46" y1="286.2" x2="53.2" y2="286.2" stroke="#e8e8e8" stroke-width="2" />
<text x="32.82" y="308.77" font-size="19.19" fill="#e6e6e6" textLength="18.67" lengthAdjust="spacingAndGlyphs">80</text>
<rect x="53.2" y="317.4" width="46.2" height="22" fill="#000" />
<rect x="53.2" y="319.0" width="44.7" height="18.6" fill="url(#bar70)" />
<line x1="46" y1="315.4" x2="53.2" y2="315.4" stroke="#e8e8e8" stroke-width="2" />
<text x="32.82" y="338.00" font-size="19.19" fill="#e6e6e6" textLength="18.67" lengthAdjust="spacingAndGlyphs">70</text>
<rect x="53.2" y="346.6" width="47.7" height="22" fill="#000" />
<rect x="53.2" y="348.2" width="46.2" height="18.6" fill="url(#bar60)" />
<line x1="46" y1="344.6" x2="53.2" y2="344.6" stroke="#e8e8e8" stroke-width="2" />
<text x="32.82" y="367.22" font-size="19.19" fill="#e6e6e6" textLength="18.67" lengthAdjust="spacingAndGlyphs">60</text>
<rect x="53.2" y="375.8" width="50.7" height="22" fill="#000" />
<rect x="53.2" y="377.4" width="49.2" height="18.6" fill="url(#bar50)" />
<line x1="46" y1="373.8" x2="53.2" y2="373.8" stroke="#e8e8e8" stroke-width="2" />
<text x="32.82" y="396.45" font-size="19.19" fill="#e6e6e6" textLength="18.67" lengthAdjust="spacingAndGlyphs">50</text>
<rect x="53.2" y="405.1" width="49.0" height="22" fill="#000" />
<rect x="53.2" y="406.7" width="47.5" height="18.6" fill="url(#bar40)" />
<line x1="46" y1="403.1" x2="53.2" y2="403.1" stroke="#e8e8e8" stroke-width="2" />
<text x="32.82" y="425.68" font-size="19.19" fill="#e6e6e6" textLength="18.67" lengthAdjust="spacingAndGlyphs">40</text>
<rect x="53.2" y="434.3" width="20.7" height="22" fill="#000" />
<rect x="53.2" y="435.9" width="19.2" height="18.6" fill="url(#bar30)" />
<line x1="46" y1="432.3" x2="53.2" y2="432.3" stroke="#e8e8e8" stroke-width="2" />
<text x="32.82" y="454.90" font-size="19.19" fill="#e6e6e6" textLength="18.67" lengthAdjust="spacingAndGlyphs">30</text>
<rect x="53.2" y="463.5" width="19.4" height="22" fill="#000" />
<rect x="53.2" y="465.1" width="17.9" height="18.6" fill="url(#bar20)" />
<line x1="46" y1="461.5" x2="53.2" y2="461.5" stroke="#e8e8e8" stroke-width="2" />
<text x="32.82" y="484.13" font-size="19.19" fill="#e6e6e6" textLength="18.67" lengthAdjust="spacingAndGlyphs">20</text>
<rect x="53.2" y="492.7" width="11.7" height="22" fill="#000" />
<rect x="53.2" y="494.3" width="10.2" height="18.6" fill="url(#bar10)" />
<line x1="46" y1="490.7" x2="53.2" y2="490.7" stroke="#e8e8e8" stroke-width="2" />
<text x="32.82" y="513.36" font-size="19.19" fill="#e6e6e6" textLength="18.67" lengthAdjust="spacingAndGlyphs">10</text>
<rect x="53.2" y="522.0" width="3.6" height="22" fill="#000" />
<rect x="53.2" y="523.6" width="2.1" height="18.6" fill="url(#bar0)" />
<line x1="46" y1="520.0" x2="53.2" y2="520.0" stroke="#e8e8e8" stroke-width="2" />
<text x="42.18" y="542.59" font-size="19.19" fill="#e6e6e6" textLength="9.34" lengthAdjust="spacingAndGlyphs">0</text>
<line x1="46" y1="549.2" x2="53.2" y2="549.2" stroke="#e8e8e8" stroke-width="2" />
<rect x="53.2" y="227.7" width="355.8" height="321.50000000000006" fill="none" stroke="#a8a8a8" stroke-width="1.8"/>
<line x1="53.2" y1="549.2" x2="53.2" y2="557.2" stroke="#e8e8e8" stroke-width="2" />
<text x="48.54" y="576.00" font-size="19.19" fill="#e6e6e6" textLength="9.34" lengthAdjust="spacingAndGlyphs">0</text>
<line x1="100.5" y1="549.2" x2="100.5" y2="557.2" stroke="#e8e8e8" stroke-width="2" />
<text x="95.84" y="576.00" font-size="19.19" fill="#e6e6e6" textLength="9.34" lengthAdjust="spacingAndGlyphs">2</text>
<line x1="147.8" y1="549.2" x2="147.8" y2="557.2" stroke="#e8e8e8" stroke-width="2" />
<text x="143.14" y="576.00" font-size="19.19" fill="#e6e6e6" textLength="9.34" lengthAdjust="spacingAndGlyphs">4</text>
<line x1="195.09999999999997" y1="549.2" x2="195.09999999999997" y2="557.2" stroke="#e8e8e8" stroke-width="2" />
<text x="190.44" y="576.00" font-size="19.19" fill="#e6e6e6" textLength="9.34" lengthAdjust="spacingAndGlyphs">6</text>
<line x1="242.39999999999998" y1="549.2" x2="242.39999999999998" y2="557.2" stroke="#e8e8e8" stroke-width="2" />
<text x="237.74" y="576.00" font-size="19.19" fill="#e6e6e6" textLength="9.34" lengthAdjust="spacingAndGlyphs">8</text>
<line x1="289.7" y1="549.2" x2="289.7" y2="557.2" stroke="#e8e8e8" stroke-width="2" />
<text x="280.36" y="576.00" font-size="19.19" fill="#e6e6e6" textLength="18.67" lengthAdjust="spacingAndGlyphs">10</text>
<line x1="336.99999999999994" y1="549.2" x2="336.99999999999994" y2="557.2" stroke="#e8e8e8" stroke-width="2" />
<text x="327.66" y="576.00" font-size="19.19" fill="#e6e6e6" textLength="18.67" lengthAdjust="spacingAndGlyphs">12</text>
<line x1="384.29999999999995" y1="549.2" x2="384.29999999999995" y2="557.2" stroke="#e8e8e8" stroke-width="2" />
<text x="374.96" y="576.00" font-size="19.19" fill="#e6e6e6" textLength="18.67" lengthAdjust="spacingAndGlyphs">14</text>
<text x="752.80" y="133.75" font-size="19.99" fill="#e6e6e6" textLength="94.38" lengthAdjust="spacingAndGlyphs">RGB Balance</text>
<rect x="486" y="140" width="658.5" height="409.20000000000005" fill="#232323" />
<line x1="486" y1="182.04" x2="1144.5" y2="182.04" stroke="#8c8c8c" stroke-width="1.8" />
<line x1="479" y1="182.04" x2="486" y2="182.04" stroke="#e8e8e8" stroke-width="2" />
<text x="459.82" y="188.64" font-size="19.19" fill="#e6e6e6" textLength="18.67" lengthAdjust="spacingAndGlyphs">40</text>
<line x1="486" y1="263.92" x2="1144.5" y2="263.92" stroke="#8c8c8c" stroke-width="1.8" />
<line x1="479" y1="263.92" x2="486" y2="263.92" stroke="#e8e8e8" stroke-width="2" />
<text x="459.82" y="270.52" font-size="19.19" fill="#e6e6e6" textLength="18.67" lengthAdjust="spacingAndGlyphs">20</text>
<line x1="486" y1="345.8" x2="1144.5" y2="345.8" stroke="#8c8c8c" stroke-width="1.8" />
<line x1="479" y1="345.8" x2="486" y2="345.8" stroke="#e8e8e8" stroke-width="2" />
<text x="469.18" y="352.40" font-size="19.19" fill="#e6e6e6" textLength="9.34" lengthAdjust="spacingAndGlyphs">0</text>
<line x1="486" y1="427.68" x2="1144.5" y2="427.68" stroke="#8c8c8c" stroke-width="1.8" />
<line x1="479" y1="427.68" x2="486" y2="427.68" stroke="#e8e8e8" stroke-width="2" />
<text x="454.24" y="434.28" font-size="19.19" fill="#e6e6e6" textLength="24.26" lengthAdjust="spacingAndGlyphs">-20</text>
<line x1="486" y1="509.56000000000006" x2="1144.5" y2="509.56000000000006" stroke="#8c8c8c" stroke-width="1.8" />
<line x1="479" y1="509.56000000000006" x2="486" y2="509.56000000000006" stroke="#e8e8e8" stroke-width="2" />
<text x="454.24" y="516.16" font-size="19.19" fill="#e6e6e6" textLength="24.26" lengthAdjust="spacingAndGlyphs">-40</text>
<polyline points="486.0,341.5 551.9,341.7 617.7,333.4 683.5,333.4 749.4,322.8 815.2,317.4 881.1,310.9 947.0,313.0 1012.8,323.6 1078.7,334.3 1144.5,340.8" fill="none" stroke="#ff0000" stroke-width="3" stroke-linejoin="round"/>
<polyline points="486.0,343.0 551.9,344.0 617.7,331.0 683.5,331.0 749.4,318.0 815.2,316.4 881.1,314.8 947.0,310.4 1012.8,321.5 1078.7,337.5 1144.5,342.8" fill="none" stroke="#008000" stroke-width="2.6" stroke-linejoin="round"/>
<polyline points="486.0,344.0 551.9,347.6 617.7,328.6 683.5,328.6 749.4,315.7 815.2,313.9 881.1,312.1 947.0,310.4 1012.8,319.2 1078.7,335.2 1144.5,344.9" fill="none" stroke="#0000ff" stroke-width="3.6" stroke-linejoin="round"/>
<rect x="486" y="140" width="658.5" height="409.20000000000005" fill="none" stroke="#a8a8a8" stroke-width="1.8"/>
<line x1="486.0" y1="549.2" x2="486.0" y2="557.2" stroke="#e8e8e8" stroke-width="2" />
<text x="481.34" y="576.00" font-size="19.19" fill="#e6e6e6" textLength="9.34" lengthAdjust="spacingAndGlyphs">0</text>
<line x1="551.85" y1="549.2" x2="551.85" y2="557.2" stroke="#e8e8e8" stroke-width="2" />
<text x="542.51" y="576.00" font-size="19.19" fill="#e6e6e6" textLength="18.67" lengthAdjust="spacingAndGlyphs">10</text>
<line x1="617.7" y1="549.2" x2="617.7" y2="557.2" stroke="#e8e8e8" stroke-width="2" />
<text x="608.36" y="576.00" font-size="19.19" fill="#e6e6e6" textLength="18.67" lengthAdjust="spacingAndGlyphs">20</text>
<line x1="683.55" y1="549.2" x2="683.55" y2="557.2" stroke="#e8e8e8" stroke-width="2" />
<text x="674.21" y="576.00" font-size="19.19" fill="#e6e6e6" textLength="18.67" lengthAdjust="spacingAndGlyphs">30</text>
<line x1="749.4" y1="549.2" x2="749.4" y2="557.2" stroke="#e8e8e8" stroke-width="2" />
<text x="740.06" y="576.00" font-size="19.19" fill="#e6e6e6" textLength="18.67" lengthAdjust="spacingAndGlyphs">40</text>
<line x1="815.25" y1="549.2" x2="815.25" y2="557.2" stroke="#e8e8e8" stroke-width="2" />
<text x="805.91" y="576.00" font-size="19.19" fill="#e6e6e6" textLength="18.67" lengthAdjust="spacingAndGlyphs">50</text>
<line x1="881.1" y1="549.2" x2="881.1" y2="557.2" stroke="#e8e8e8" stroke-width="2" />
<text x="871.76" y="576.00" font-size="19.19" fill="#e6e6e6" textLength="18.67" lengthAdjust="spacingAndGlyphs">60</text>
<line x1="946.95" y1="549.2" x2="946.95" y2="557.2" stroke="#e8e8e8" stroke-width="2" />
<text x="937.61" y="576.00" font-size="19.19" fill="#e6e6e6" textLength="18.67" lengthAdjust="spacingAndGlyphs">70</text>
<line x1="1012.8" y1="549.2" x2="1012.8" y2="557.2" stroke="#e8e8e8" stroke-width="2" />
<text x="1003.46" y="576.00" font-size="19.19" fill="#e6e6e6" textLength="18.67" lengthAdjust="spacingAndGlyphs">80</text>
<line x1="1078.65" y1="549.2" x2="1078.65" y2="557.2" stroke="#e8e8e8" stroke-width="2" />
<text x="1069.31" y="576.00" font-size="19.19" fill="#e6e6e6" textLength="18.67" lengthAdjust="spacingAndGlyphs">90</text>
<line x1="1144.5" y1="549.2" x2="1144.5" y2="557.2" stroke="#e8e8e8" stroke-width="2" />
<text x="1130.50" y="576.00" font-size="19.19" fill="#e6e6e6" textLength="28.01" lengthAdjust="spacingAndGlyphs">100</text>
<text x="1472.70" y="133.75" font-size="19.99" fill="#e6e6e6" textLength="124.78" lengthAdjust="spacingAndGlyphs">Gamma Log/Log</text>
<rect x="1220" y="140" width="660" height="408.70000000000005" fill="#232323" />
<line x1="1220" y1="192.58000000000004" x2="1880" y2="192.58000000000004" stroke="#8c8c8c" stroke-width="1.8" />
<line x1="1213" y1="192.58000000000004" x2="1220" y2="192.58000000000004" stroke="#e8e8e8" stroke-width="2" />
<text x="1189.16" y="199.18" font-size="19.19" fill="#e6e6e6" textLength="23.34" lengthAdjust="spacingAndGlyphs">2,4</text>
<line x1="1220" y1="243.43999999999994" x2="1880" y2="243.43999999999994" stroke="#8c8c8c" stroke-width="1.8" />
<line x1="1213" y1="243.43999999999994" x2="1220" y2="243.43999999999994" stroke="#e8e8e8" stroke-width="2" />
<text x="1189.16" y="250.04" font-size="19.19" fill="#e6e6e6" textLength="23.34" lengthAdjust="spacingAndGlyphs">2,2</text>
<line x1="1220" y1="294.3" x2="1880" y2="294.3" stroke="#8c8c8c" stroke-width="1.8" />
<line x1="1213" y1="294.3" x2="1220" y2="294.3" stroke="#e8e8e8" stroke-width="2" />
<text x="1203.18" y="300.90" font-size="19.19" fill="#e6e6e6" textLength="9.34" lengthAdjust="spacingAndGlyphs">2</text>
<line x1="1220" y1="345.15999999999997" x2="1880" y2="345.15999999999997" stroke="#8c8c8c" stroke-width="1.8" />
<line x1="1213" y1="345.15999999999997" x2="1220" y2="345.15999999999997" stroke="#e8e8e8" stroke-width="2" />
<text x="1189.16" y="351.76" font-size="19.19" fill="#e6e6e6" textLength="23.34" lengthAdjust="spacingAndGlyphs">1,8</text>
<line x1="1220" y1="396.02" x2="1880" y2="396.02" stroke="#8c8c8c" stroke-width="1.8" />
<line x1="1213" y1="396.02" x2="1220" y2="396.02" stroke="#e8e8e8" stroke-width="2" />
<text x="1189.16" y="402.62" font-size="19.19" fill="#e6e6e6" textLength="23.34" lengthAdjust="spacingAndGlyphs">1,6</text>
<line x1="1220" y1="446.88000000000005" x2="1880" y2="446.88000000000005" stroke="#8c8c8c" stroke-width="1.8" />
<line x1="1213" y1="446.88000000000005" x2="1220" y2="446.88000000000005" stroke="#e8e8e8" stroke-width="2" />
<text x="1189.16" y="453.48" font-size="19.19" fill="#e6e6e6" textLength="23.34" lengthAdjust="spacingAndGlyphs">1,4</text>
<line x1="1220" y1="497.74" x2="1880" y2="497.74" stroke="#8c8c8c" stroke-width="1.8" />
<line x1="1213" y1="497.74" x2="1220" y2="497.74" stroke="#e8e8e8" stroke-width="2" />
<text x="1189.16" y="504.34" font-size="19.19" fill="#e6e6e6" textLength="23.34" lengthAdjust="spacingAndGlyphs">1,2</text>
<line x1="1213" y1="548.6" x2="1220" y2="548.6" stroke="#e8e8e8" stroke-width="2" />
<text x="1203.18" y="555.20" font-size="19.19" fill="#e6e6e6" textLength="9.34" lengthAdjust="spacingAndGlyphs">1</text>
<polyline points="1220.0,446.1 1286.0,241.2 1352.0,255.7 1418.0,255.2 1484.0,270.2 1550.0,277.8 1616.0,287.5 1682.0,304.2 1748.0,302.5 1814.0,279.1 1880.0,242.2" fill="none" stroke="#8a8a8a" stroke-width="3" stroke-linejoin="round"/>
<polyline points="1220.5,447.5 1224.3,244.5 1225.5,242 1232,240.8 1880,241" fill="none" stroke="#f8f800" stroke-width="3.4" stroke-linejoin="miter"/>
<rect x="1220" y="140" width="660" height="408.70000000000005" fill="none" stroke="#a8a8a8" stroke-width="1.8"/>
<line x1="1220" y1="548.7" x2="1220" y2="556.7" stroke="#e8e8e8" stroke-width="2" />
<text x="1215.34" y="576.00" font-size="19.19" fill="#e6e6e6" textLength="9.34" lengthAdjust="spacingAndGlyphs">0</text>
<line x1="1286" y1="548.7" x2="1286" y2="556.7" stroke="#e8e8e8" stroke-width="2" />
<text x="1276.66" y="576.00" font-size="19.19" fill="#e6e6e6" textLength="18.67" lengthAdjust="spacingAndGlyphs">10</text>
<line x1="1352" y1="548.7" x2="1352" y2="556.7" stroke="#e8e8e8" stroke-width="2" />
<text x="1342.66" y="576.00" font-size="19.19" fill="#e6e6e6" textLength="18.67" lengthAdjust="spacingAndGlyphs">20</text>
<line x1="1418" y1="548.7" x2="1418" y2="556.7" stroke="#e8e8e8" stroke-width="2" />
<text x="1408.66" y="576.00" font-size="19.19" fill="#e6e6e6" textLength="18.67" lengthAdjust="spacingAndGlyphs">30</text>
<line x1="1484" y1="548.7" x2="1484" y2="556.7" stroke="#e8e8e8" stroke-width="2" />
<text x="1474.66" y="576.00" font-size="19.19" fill="#e6e6e6" textLength="18.67" lengthAdjust="spacingAndGlyphs">40</text>
<line x1="1550" y1="548.7" x2="1550" y2="556.7" stroke="#e8e8e8" stroke-width="2" />
<text x="1540.66" y="576.00" font-size="19.19" fill="#e6e6e6" textLength="18.67" lengthAdjust="spacingAndGlyphs">50</text>
<line x1="1616" y1="548.7" x2="1616" y2="556.7" stroke="#e8e8e8" stroke-width="2" />
<text x="1606.66" y="576.00" font-size="19.19" fill="#e6e6e6" textLength="18.67" lengthAdjust="spacingAndGlyphs">60</text>
<line x1="1682" y1="548.7" x2="1682" y2="556.7" stroke="#e8e8e8" stroke-width="2" />
<text x="1672.66" y="576.00" font-size="19.19" fill="#e6e6e6" textLength="18.67" lengthAdjust="spacingAndGlyphs">70</text>
<line x1="1748" y1="548.7" x2="1748" y2="556.7" stroke="#e8e8e8" stroke-width="2" />
<text x="1738.66" y="576.00" font-size="19.19" fill="#e6e6e6" textLength="18.67" lengthAdjust="spacingAndGlyphs">80</text>
<line x1="1814" y1="548.7" x2="1814" y2="556.7" stroke="#e8e8e8" stroke-width="2" />
<text x="1804.66" y="576.00" font-size="19.19" fill="#e6e6e6" textLength="18.67" lengthAdjust="spacingAndGlyphs">90</text>
<line x1="1880" y1="548.7" x2="1880" y2="556.7" stroke="#e8e8e8" stroke-width="2" />
<text x="1866.00" y="576.00" font-size="19.19" fill="#e6e6e6" textLength="28.01" lengthAdjust="spacingAndGlyphs">100</text>
<text x="99.80" y="630.70" font-size="39.68" fill="#f4f4f4" textLength="247.57" lengthAdjust="spacingAndGlyphs">Avg dE2000: 1,3</text>
<text x="573.10" y="630.70" font-size="39.68" fill="#f4f4f4" textLength="216.91" lengthAdjust="spacingAndGlyphs">Avg CCT: 6517</text>
<text x="984.80" y="630.70" font-size="39.68" fill="#f4f4f4" textLength="355.19" lengthAdjust="spacingAndGlyphs">Contrast Ratio: 385718</text>
<text x="1497.30" y="630.70" font-size="39.68" fill="#f4f4f4" textLength="292.24" lengthAdjust="spacingAndGlyphs">Total Gamma: 2,07</text>
<line x1="283.5" y1="656" x2="283.5" y2="823" stroke="#151515" stroke-width="1.2" />
<g transform="translate(298.6 714.5) rotate(-90)">
<text x="0.00" y="0.00" font-size="14.83" fill="#f0f0f0" font-weight="bold" textLength="44.78" lengthAdjust="spacingAndGlyphs">Actual</text>
</g>
<g transform="translate(298.6 787.5) rotate(-90)">
<text x="0.00" y="0.00" font-size="14.83" fill="#f0f0f0" font-weight="bold" textLength="44.09" lengthAdjust="spacingAndGlyphs">Target</text>
</g>
<rect x="307.2" y="663" width="114" height="66" fill="#000000" />
<rect x="307.2" y="729" width="114" height="66" fill="#000000" />
<rect x="308.2" y="664" width="112" height="130" fill="none" stroke="#f2f2f2" stroke-width="2"/>
<text x="359.96" y="812.50" font-size="15.26" fill="#f0f0f0" textLength="8.49" lengthAdjust="spacingAndGlyphs">0</text>
<rect x="439.4" y="663" width="114" height="66" fill="#141414" />
<rect x="439.4" y="729" width="114" height="66" fill="#141414" />
<rect x="440.4" y="664" width="112" height="130" fill="none" stroke="#f2f2f2" stroke-width="2"/>
<text x="487.91" y="812.50" font-size="15.26" fill="#f0f0f0" textLength="16.98" lengthAdjust="spacingAndGlyphs">10</text>
<rect x="571.6" y="663" width="114" height="66" fill="#333333" />
<rect x="571.6" y="729" width="114" height="66" fill="#323232" />
<rect x="572.6" y="664" width="112" height="130" fill="none" stroke="#f2f2f2" stroke-width="2"/>
<text x="620.11" y="812.50" font-size="15.26" fill="#f0f0f0" textLength="16.98" lengthAdjust="spacingAndGlyphs">20</text>
<rect x="703.8" y="663" width="114" height="66" fill="#4f4f4f" />
<rect x="703.8" y="729" width="114" height="66" fill="#4b4b4b" />
<rect x="704.8" y="664" width="112" height="130" fill="none" stroke="#f2f2f2" stroke-width="2"/>
<text x="752.31" y="812.50" font-size="15.26" fill="#f0f0f0" textLength="16.98" lengthAdjust="spacingAndGlyphs">30</text>
<rect x="836.0" y="663" width="114" height="66" fill="#6b6b6c" />
<rect x="836.0" y="729" width="114" height="66" fill="#666666" />
<rect x="837.0" y="664" width="112" height="130" fill="none" stroke="#f2f2f2" stroke-width="2"/>
<text x="884.51" y="812.50" font-size="15.26" fill="#f0f0f0" textLength="16.98" lengthAdjust="spacingAndGlyphs">40</text>
<rect x="968.2" y="663" width="114" height="66" fill="#888888" />
<rect x="968.2" y="729" width="114" height="66" fill="#858585" />
<rect x="969.2" y="664" width="112" height="130" fill="none" stroke="#f2f2f2" stroke-width="2"/>
<text x="1016.71" y="812.50" font-size="15.26" fill="#f0f0f0" textLength="16.98" lengthAdjust="spacingAndGlyphs">50</text>
<rect x="1100.4" y="663" width="114" height="66" fill="#a1a1a1" />
<rect x="1100.4" y="729" width="114" height="66" fill="#9c9c9c" />
<rect x="1101.4" y="664" width="112" height="130" fill="none" stroke="#f2f2f2" stroke-width="2"/>
<text x="1148.91" y="812.50" font-size="15.26" fill="#f0f0f0" textLength="16.98" lengthAdjust="spacingAndGlyphs">60</text>
<rect x="1232.6" y="663" width="114" height="66" fill="#bdbdbd" />
<rect x="1232.6" y="729" width="114" height="66" fill="#b5b5b5" />
<rect x="1233.6" y="664" width="112" height="130" fill="none" stroke="#f2f2f2" stroke-width="2"/>
<text x="1281.11" y="812.50" font-size="15.26" fill="#f0f0f0" textLength="16.98" lengthAdjust="spacingAndGlyphs">70</text>
<rect x="1364.8" y="663" width="114" height="66" fill="#d4d4d4" />
<rect x="1364.8" y="729" width="114" height="66" fill="#cfcfcf" />
<rect x="1365.8" y="664" width="112" height="130" fill="none" stroke="#f2f2f2" stroke-width="2"/>
<text x="1413.31" y="812.50" font-size="15.26" fill="#f0f0f0" textLength="16.98" lengthAdjust="spacingAndGlyphs">80</text>
<rect x="1497.0" y="663" width="114" height="66" fill="#e8e8e8" />
<rect x="1497.0" y="729" width="114" height="66" fill="#e6e6e6" />
<rect x="1498.0" y="664" width="112" height="130" fill="none" stroke="#f2f2f2" stroke-width="2"/>
<text x="1545.51" y="812.50" font-size="15.26" fill="#f0f0f0" textLength="16.98" lengthAdjust="spacingAndGlyphs">90</text>
<rect x="1629.2" y="663" width="114" height="66" fill="#ffffff" />
<rect x="1629.2" y="729" width="114" height="66" fill="#ffffff" />
<rect x="1630.2" y="664" width="112" height="130" fill="none" stroke="#f2f2f2" stroke-width="2"/>
<text x="1673.48" y="812.50" font-size="15.26" fill="#f0f0f0" textLength="25.46" lengthAdjust="spacingAndGlyphs">100</text>
<text x="18.40" y="893.00" font-size="38.37" fill="#f4f4f4" textLength="250.41" lengthAdjust="spacingAndGlyphs">Current Reading</text>
<text x="18.20" y="947.00" font-size="32.85" fill="#f4f4f4" textLength="116.98" lengthAdjust="spacingAndGlyphs">x: 0,3132</text>
<text x="18.20" y="999.80" font-size="32.85" fill="#f4f4f4" textLength="117.48" lengthAdjust="spacingAndGlyphs">y: 0,3294</text>
<text x="18.20" y="1051.80" font-size="32.85" fill="#f4f4f4" textLength="125.63" lengthAdjust="spacingAndGlyphs">fL: 100,01</text>
<text x="18.20" y="1104.40" font-size="32.85" fill="#f4f4f4" textLength="181.58" lengthAdjust="spacingAndGlyphs">cd/m²: 342,67</text>
<rect x="377" y="852" width="336.5" height="275.5" fill="#1c1c1c" />
<rect x="385" y="860" width="321" height="262.5" fill="#333333" />
<g clip-path="url(#cclip)"><g filter="url(#vblur)"><rect x="428.2" y="856.5" width="273.40000000000003" height="4.5" fill="url(#cs0)"/><rect x="428.2" y="860.5" width="273.40000000000003" height="4.5" fill="url(#cs1)"/><rect x="428.2" y="864.5" width="273.40000000000003" height="4.5" fill="url(#cs2)"/><rect x="428.2" y="868.5" width="273.40000000000003" height="4.5" fill="url(#cs3)"/><rect x="428.2" y="872.5" width="273.40000000000003" height="4.5" fill="url(#cs4)"/><rect x="428.2" y="876.5" width="273.40000000000003" height="4.5" fill="url(#cs5)"/><rect x="428.2" y="880.5" width="273.40000000000003" height="4.5" fill="url(#cs6)"/><rect x="428.2" y="884.5" width="273.40000000000003" height="4.5" fill="url(#cs7)"/><rect x="428.2" y="888.5" width="273.40000000000003" height="4.5" fill="url(#cs8)"/><rect x="428.2" y="892.5" width="273.40000000000003" height="4.5" fill="url(#cs9)"/><rect x="428.2" y="896.5" width="273.40000000000003" height="4.5" fill="url(#cs10)"/><rect x="428.2" y="900.5" width="273.40000000000003" height="4.5" fill="url(#cs11)"/><rect x="428.2" y="904.5" width="273.40000000000003" height="4.5" fill="url(#cs12)"/><rect x="428.2" y="908.5" width="273.40000000000003" height="4.5" fill="url(#cs13)"/><rect x="428.2" y="912.5" width="273.40000000000003" height="4.5" fill="url(#cs14)"/><rect x="428.2" y="916.5" width="273.40000000000003" height="4.5" fill="url(#cs15)"/><rect x="428.2" y="920.5" width="273.40000000000003" height="4.5" fill="url(#cs16)"/><rect x="428.2" y="924.5" width="273.40000000000003" height="4.5" fill="url(#cs17)"/><rect x="428.2" y="928.5" width="273.40000000000003" height="4.5" fill="url(#cs18)"/><rect x="428.2" y="932.5" width="273.40000000000003" height="4.5" fill="url(#cs19)"/><rect x="428.2" y="936.5" width="273.40000000000003" height="4.5" fill="url(#cs20)"/><rect x="428.2" y="940.5" width="273.40000000000003" height="4.5" fill="url(#cs21)"/><rect x="428.2" y="944.5" width="273.40000000000003" height="4.5" fill="url(#cs22)"/><rect x="428.2" y="948.5" width="273.40000000000003" height="4.5" fill="url(#cs23)"/><rect x="428.2" y="952.5" width="273.40000000000003" height="4.5" fill="url(#cs24)"/><rect x="428.2" y="956.5" width="273.40000000000003" height="4.5" fill="url(#cs25)"/><rect x="428.2" y="960.5" width="273.40000000000003" height="4.5" fill="url(#cs26)"/><rect x="428.2" y="964.5" width="273.40000000000003" height="4.5" fill="url(#cs27)"/><rect x="428.2" y="968.5" width="273.40000000000003" height="4.5" fill="url(#cs28)"/><rect x="428.2" y="972.5" width="273.40000000000003" height="4.5" fill="url(#cs29)"/><rect x="428.2" y="976.5" width="273.40000000000003" height="4.5" fill="url(#cs30)"/><rect x="428.2" y="980.5" width="273.40000000000003" height="4.5" fill="url(#cs31)"/><rect x="428.2" y="984.5" width="273.40000000000003" height="4.5" fill="url(#cs32)"/><rect x="428.2" y="988.5" width="273.40000000000003" height="4.5" fill="url(#cs33)"/><rect x="428.2" y="992.5" width="273.40000000000003" height="4.5" fill="url(#cs34)"/><rect x="428.2" y="996.5" width="273.40000000000003" height="4.5" fill="url(#cs35)"/><rect x="428.2" y="1000.5" width="273.40000000000003" height="4.5" fill="url(#cs36)"/><rect x="428.2" y="1004.5" width="273.40000000000003" height="4.5" fill="url(#cs37)"/><rect x="428.2" y="1008.5" width="273.40000000000003" height="4.5" fill="url(#cs38)"/><rect x="428.2" y="1012.5" width="273.40000000000003" height="4.5" fill="url(#cs39)"/><rect x="428.2" y="1016.5" width="273.40000000000003" height="4.5" fill="url(#cs40)"/><rect x="428.2" y="1020.5" width="273.40000000000003" height="4.5" fill="url(#cs41)"/><rect x="428.2" y="1024.5" width="273.40000000000003" height="4.5" fill="url(#cs42)"/><rect x="428.2" y="1028.5" width="273.40000000000003" height="4.5" fill="url(#cs43)"/><rect x="428.2" y="1032.5" width="273.40000000000003" height="4.5" fill="url(#cs44)"/><rect x="428.2" y="1036.5" width="273.40000000000003" height="4.5" fill="url(#cs45)"/><rect x="428.2" y="1040.5" width="273.40000000000003" height="4.5" fill="url(#cs46)"/><rect x="428.2" y="1044.5" width="273.40000000000003" height="4.5" fill="url(#cs47)"/><rect x="428.2" y="1048.5" width="273.40000000000003" height="4.5" fill="url(#cs48)"/><rect x="428.2" y="1052.5" width="273.40000000000003" height="4.5" fill="url(#cs49)"/><rect x="428.2" y="1056.5" width="273.40000000000003" height="4.5" fill="url(#cs50)"/><rect x="428.2" y="1060.5" width="273.40000000000003" height="4.5" fill="url(#cs51)"/><rect x="428.2" y="1064.5" width="273.40000000000003" height="4.5" fill="url(#cs52)"/><rect x="428.2" y="1068.5" width="273.40000000000003" height="4.5" fill="url(#cs53)"/><rect x="428.2" y="1072.5" width="273.40000000000003" height="4.5" fill="url(#cs54)"/><rect x="428.2" y="1076.5" width="273.40000000000003" height="4.5" fill="url(#cs55)"/><rect x="428.2" y="1080.5" width="273.40000000000003" height="4.5" fill="url(#cs56)"/><rect x="428.2" y="1084.5" width="273.40000000000003" height="4.5" fill="url(#cs57)"/><rect x="428.2" y="1088.5" width="273.40000000000003" height="4.5" fill="url(#cs58)"/><rect x="428.2" y="1092.5" width="273.40000000000003" height="4.5" fill="url(#cs59)"/></g>
<polyline points="1073.7,708.6 1043.9,722.3 1015.4,736.1 988.1,749.8 962.0,763.6 937.0,777.2 912.8,774.3 890.0,786.4 868.3,798.3 847.6,810.0 827.8,821.4 808.9,832.7 790.8,843.7 773.6,854.4 757.0,864.9 741.2,875.1 726.1,885.1 711.5,894.9 697.6,904.4 684.3,913.7 671.5,922.7 659.2,931.5 647.4,940.1 636.0,948.4 625.1,956.6 614.6,964.5 604.5,972.2 594.8,979.7 585.4,987.0 576.4,994.1 567.7,1001.1 559.2,1007.8 551.1,1014.4 543.3,1020.8 535.7,1027.1 528.4,1033.1 521.4,1039.1 514.5,1044.8 507.9,1050.5 501.5,1056.0 495.3,1061.3 489.3,1066.5 483.5,1071.6 477.8,1076.6 472.3,1081.4 467.0,1086.1 461.9,1090.7 456.9,1095.2 452.0,1099.6 447.3,1103.9 442.7,1108.1 438.3,1112.2 433.9,1116.2 429.7,1120.0 425.6,1123.9 421.6,1127.6 417.7,1131.2 413.9,1134.8 410.3,1138.2 406.7,1141.6 403.2,1145.0 399.8,1148.2 396.4,1151.4 393.2,1154.5 390.0,1157.6 386.9,1160.5 383.9,1163.5 381.0,1166.3 378.1,1169.1 375.3,1171.9 372.6,1174.5 369.9,1177.2 367.3,1179.8 364.7,1182.3 362.2,1184.8 359.8,1187.2 357.4,1189.6 355.1,1191.9 352.8,1194.2 350.5,1196.4 348.3,1198.6 346.2,1200.8 344.1,1202.9 342.0,1205.0 340.0,1207.0 338.1,1209.0" fill="none" stroke="#0a0a0a" stroke-width="3.3"/>
</g>
<rect x="427.7" y="864.0" width="274.40000000000003" height="221.79999999999995" fill="none" stroke="#9a9a9a" stroke-width="1.5"/>
<circle cx="595.6" cy="947" r="5.6" fill="#1a1a1a"/>
<circle cx="550.5" cy="980" r="5" fill="#555" stroke="#111" stroke-width="1.3"/>
<circle cx="550.5" cy="976.5" r="5" fill="#6a6a6a" stroke="#111" stroke-width="1.3"/>
<circle cx="558" cy="976" r="5" fill="#e0e0e0" stroke="#222" stroke-width="1"/>
<circle cx="562" cy="976" r="5" fill="#f4f4f4" stroke="#222" stroke-width="1"/>
<rect x="557.3" y="967.2" width="14.6" height="15.8" fill="none" stroke="#111" stroke-width="1.8"/>
<circle cx="565.5" cy="973.5" r="5.2" fill="#ffffff" stroke="#111" stroke-width="1.1"/>
<line x1="421" y1="882.3" x2="428.2" y2="882.3" stroke="#e8e8e8" stroke-width="2" />
<text x="388.20" y="888.90" font-size="18.90" fill="#e6e6e6" textLength="32.18" lengthAdjust="spacingAndGlyphs">0,35</text>
<line x1="421" y1="927.3999999999997" x2="428.2" y2="927.3999999999997" stroke="#e8e8e8" stroke-width="2" />
<text x="388.20" y="934.00" font-size="18.90" fill="#e6e6e6" textLength="32.18" lengthAdjust="spacingAndGlyphs">0,34</text>
<line x1="421" y1="972.4999999999998" x2="428.2" y2="972.4999999999998" stroke="#e8e8e8" stroke-width="2" />
<text x="388.20" y="979.10" font-size="18.90" fill="#e6e6e6" textLength="32.18" lengthAdjust="spacingAndGlyphs">0,33</text>
<line x1="421" y1="1017.5999999999998" x2="428.2" y2="1017.5999999999998" stroke="#e8e8e8" stroke-width="2" />
<text x="388.20" y="1024.20" font-size="18.90" fill="#e6e6e6" textLength="32.18" lengthAdjust="spacingAndGlyphs">0,32</text>
<line x1="421" y1="1062.6999999999998" x2="428.2" y2="1062.6999999999998" stroke="#e8e8e8" stroke-width="2" />
<text x="388.20" y="1069.30" font-size="18.90" fill="#e6e6e6" textLength="32.18" lengthAdjust="spacingAndGlyphs">0,31</text>
<line x1="438.2" y1="1085.3" x2="438.2" y2="1091.8" stroke="#e8e8e8" stroke-width="2" />
<text x="422.10" y="1113.70" font-size="18.90" fill="#e6e6e6" textLength="32.18" lengthAdjust="spacingAndGlyphs">0,29</text>
<line x1="493.30000000000007" y1="1085.3" x2="493.30000000000007" y2="1091.8" stroke="#e8e8e8" stroke-width="2" />
<text x="481.81" y="1113.70" font-size="18.90" fill="#e6e6e6" textLength="22.99" lengthAdjust="spacingAndGlyphs">0,3</text>
<line x1="548.4000000000001" y1="1085.3" x2="548.4000000000001" y2="1091.8" stroke="#e8e8e8" stroke-width="2" />
<text x="532.30" y="1113.70" font-size="18.90" fill="#e6e6e6" textLength="32.18" lengthAdjust="spacingAndGlyphs">0,31</text>
<line x1="603.5000000000001" y1="1085.3" x2="603.5000000000001" y2="1091.8" stroke="#e8e8e8" stroke-width="2" />
<text x="587.40" y="1113.70" font-size="18.90" fill="#e6e6e6" textLength="32.18" lengthAdjust="spacingAndGlyphs">0,32</text>
<line x1="658.6000000000001" y1="1085.3" x2="658.6000000000001" y2="1091.8" stroke="#e8e8e8" stroke-width="2" />
<text x="642.50" y="1113.70" font-size="18.90" fill="#e6e6e6" textLength="32.18" lengthAdjust="spacingAndGlyphs">0,33</text>
<rect x="723" y="836" width="15" height="35.7" fill="#000" />
<rect x="738" y="836" width="1105" height="18.2" fill="#2f2f2f" />
<rect x="738" y="854.2" width="1105" height="17.5" fill="#161616" />
<text x="893.00" y="861.60" font-size="18.75" fill="#ffffff" textLength="9.18" lengthAdjust="spacingAndGlyphs">0</text>
<text x="989.50" y="861.60" font-size="18.75" fill="#ffffff" textLength="18.35" lengthAdjust="spacingAndGlyphs">10</text>
<text x="1075.40" y="861.60" font-size="18.75" fill="#ffffff" textLength="18.35" lengthAdjust="spacingAndGlyphs">20</text>
<text x="1161.30" y="861.60" font-size="18.75" fill="#ffffff" textLength="18.35" lengthAdjust="spacingAndGlyphs">30</text>
<text x="1247.20" y="861.60" font-size="18.75" fill="#ffffff" textLength="18.35" lengthAdjust="spacingAndGlyphs">40</text>
<text x="1333.10" y="861.60" font-size="18.75" fill="#ffffff" textLength="18.35" lengthAdjust="spacingAndGlyphs">50</text>
<text x="1419.00" y="861.60" font-size="18.75" fill="#ffffff" textLength="18.35" lengthAdjust="spacingAndGlyphs">60</text>
<text x="1504.90" y="861.60" font-size="18.75" fill="#ffffff" textLength="18.35" lengthAdjust="spacingAndGlyphs">70</text>
<text x="1590.80" y="861.60" font-size="18.75" fill="#ffffff" textLength="18.35" lengthAdjust="spacingAndGlyphs">80</text>
<text x="1676.70" y="861.60" font-size="18.75" fill="#ffffff" textLength="18.35" lengthAdjust="spacingAndGlyphs">90</text>
<text x="1762.60" y="861.60" font-size="18.75" fill="#ffffff" textLength="27.53" lengthAdjust="spacingAndGlyphs">100</text>
<rect x="723" y="871.7" width="15" height="33.3" fill="#2a2a2a" />
<rect x="738" y="871.7" width="1105" height="33.3" fill="#444444" />
<text x="743.40" y="896.10" font-size="21.22" fill="#f6f6f6" textLength="62.70" lengthAdjust="spacingAndGlyphs">x: CIE31</text>
<text x="893.00" y="896.10" font-size="21.51" fill="#f6f6f6" textLength="43.88" lengthAdjust="spacingAndGlyphs">0,522</text>
<text x="989.50" y="896.10" font-size="21.51" fill="#f6f6f6" textLength="43.88" lengthAdjust="spacingAndGlyphs">0,318</text>
<text x="1075.40" y="896.10" font-size="21.51" fill="#f6f6f6" textLength="43.88" lengthAdjust="spacingAndGlyphs">0,310</text>
<text x="1161.30" y="896.10" font-size="21.51" fill="#f6f6f6" textLength="42.57" lengthAdjust="spacingAndGlyphs">0,311</text>
<text x="1247.20" y="896.10" font-size="21.51" fill="#f6f6f6" textLength="43.88" lengthAdjust="spacingAndGlyphs">0,310</text>
<text x="1333.10" y="896.10" font-size="21.51" fill="#f6f6f6" textLength="43.88" lengthAdjust="spacingAndGlyphs">0,312</text>
<text x="1419.00" y="896.10" font-size="21.51" fill="#f6f6f6" textLength="43.88" lengthAdjust="spacingAndGlyphs">0,313</text>
<text x="1504.90" y="896.10" font-size="21.51" fill="#f6f6f6" textLength="43.88" lengthAdjust="spacingAndGlyphs">0,312</text>
<text x="1590.80" y="896.10" font-size="21.51" fill="#f6f6f6" textLength="43.88" lengthAdjust="spacingAndGlyphs">0,312</text>
<text x="1676.70" y="896.10" font-size="21.51" fill="#f6f6f6" textLength="43.88" lengthAdjust="spacingAndGlyphs">0,313</text>
<text x="1762.60" y="896.10" font-size="21.51" fill="#f6f6f6" textLength="43.88" lengthAdjust="spacingAndGlyphs">0,313</text>
<rect x="723" y="904.93" width="15" height="33.3" fill="#2a2a2a" />
<rect x="738" y="904.93" width="1105" height="33.3" fill="#7f7f7f" />
<text x="743.40" y="929.33" font-size="21.22" fill="#ececec" textLength="63.30" lengthAdjust="spacingAndGlyphs">y: CIE31</text>
<text x="893.00" y="929.33" font-size="21.51" fill="#ececec" textLength="43.88" lengthAdjust="spacingAndGlyphs">0,043</text>
<text x="989.50" y="929.33" font-size="21.51" fill="#ececec" textLength="43.88" lengthAdjust="spacingAndGlyphs">0,335</text>
<text x="1075.40" y="929.33" font-size="21.51" fill="#ececec" textLength="43.88" lengthAdjust="spacingAndGlyphs">0,328</text>
<text x="1161.30" y="929.33" font-size="21.51" fill="#ececec" textLength="43.88" lengthAdjust="spacingAndGlyphs">0,328</text>
<text x="1247.20" y="929.33" font-size="21.51" fill="#ececec" textLength="43.88" lengthAdjust="spacingAndGlyphs">0,328</text>
<text x="1333.10" y="929.33" font-size="21.51" fill="#ececec" textLength="43.88" lengthAdjust="spacingAndGlyphs">0,329</text>
<text x="1419.00" y="929.33" font-size="21.51" fill="#ececec" textLength="43.88" lengthAdjust="spacingAndGlyphs">0,329</text>
<text x="1504.90" y="929.33" font-size="21.51" fill="#ececec" textLength="43.88" lengthAdjust="spacingAndGlyphs">0,329</text>
<text x="1590.80" y="929.33" font-size="21.51" fill="#ececec" textLength="43.88" lengthAdjust="spacingAndGlyphs">0,328</text>
<text x="1676.70" y="929.33" font-size="21.51" fill="#ececec" textLength="43.88" lengthAdjust="spacingAndGlyphs">0,329</text>
<text x="1762.60" y="929.33" font-size="21.51" fill="#ececec" textLength="43.88" lengthAdjust="spacingAndGlyphs">0,329</text>
<rect x="723" y="938.16" width="15" height="33.3" fill="#2a2a2a" />
<rect x="738" y="938.16" width="1105" height="33.3" fill="#444444" />
<text x="743.40" y="962.56" font-size="21.22" fill="#f6f6f6" textLength="10.39" lengthAdjust="spacingAndGlyphs">Y</text>
<text x="893.00" y="962.56" font-size="21.51" fill="#f6f6f6" textLength="43.88" lengthAdjust="spacingAndGlyphs">0,001</text>
<text x="989.50" y="962.56" font-size="21.51" fill="#f6f6f6" textLength="43.88" lengthAdjust="spacingAndGlyphs">2,239</text>
<text x="1075.40" y="962.56" font-size="21.51" fill="#f6f6f6" textLength="53.63" lengthAdjust="spacingAndGlyphs">10,835</text>
<text x="1161.30" y="962.56" font-size="21.51" fill="#f6f6f6" textLength="53.63" lengthAdjust="spacingAndGlyphs">25,461</text>
<text x="1247.20" y="962.56" font-size="21.51" fill="#f6f6f6" textLength="53.63" lengthAdjust="spacingAndGlyphs">50,546</text>
<text x="1333.10" y="962.56" font-size="21.51" fill="#f6f6f6" textLength="53.63" lengthAdjust="spacingAndGlyphs">82,905</text>
<text x="1419.00" y="962.56" font-size="21.51" fill="#f6f6f6" textLength="63.38" lengthAdjust="spacingAndGlyphs">122,072</text>
<text x="1504.90" y="962.56" font-size="21.51" fill="#f6f6f6" textLength="63.38" lengthAdjust="spacingAndGlyphs">169,697</text>
<text x="1590.80" y="962.56" font-size="21.51" fill="#f6f6f6" textLength="63.38" lengthAdjust="spacingAndGlyphs">221,169</text>
<text x="1676.70" y="962.56" font-size="21.51" fill="#f6f6f6" textLength="63.38" lengthAdjust="spacingAndGlyphs">277,223</text>
<text x="1762.60" y="962.56" font-size="21.51" fill="#f6f6f6" textLength="63.38" lengthAdjust="spacingAndGlyphs">342,669</text>
<rect x="723" y="971.39" width="15" height="33.3" fill="#2a2a2a" />
<rect x="738" y="971.39" width="1105" height="33.3" fill="#7f7f7f" />
<text x="743.40" y="995.79" font-size="21.22" fill="#ececec" textLength="65.72" lengthAdjust="spacingAndGlyphs">Target Y</text>
<text x="893.00" y="995.79" font-size="21.51" fill="#ececec" textLength="43.88" lengthAdjust="spacingAndGlyphs">0,001</text>
<text x="989.50" y="995.79" font-size="21.51" fill="#ececec" textLength="43.88" lengthAdjust="spacingAndGlyphs">2,261</text>
<text x="1075.40" y="995.79" font-size="21.51" fill="#ececec" textLength="43.88" lengthAdjust="spacingAndGlyphs">9,948</text>
<text x="1161.30" y="995.79" font-size="21.51" fill="#ececec" textLength="53.63" lengthAdjust="spacingAndGlyphs">23,917</text>
<text x="1247.20" y="995.79" font-size="21.51" fill="#ececec" textLength="53.63" lengthAdjust="spacingAndGlyphs">45,680</text>
<text x="1333.10" y="995.79" font-size="21.51" fill="#ececec" textLength="53.63" lengthAdjust="spacingAndGlyphs">75,264</text>
<text x="1419.00" y="995.79" font-size="21.51" fill="#ececec" textLength="60.77" lengthAdjust="spacingAndGlyphs">111,425</text>
<text x="1504.90" y="995.79" font-size="21.51" fill="#ececec" textLength="63.38" lengthAdjust="spacingAndGlyphs">155,430</text>
<text x="1590.80" y="995.79" font-size="21.51" fill="#ececec" textLength="63.38" lengthAdjust="spacingAndGlyphs">209,773</text>
<text x="1676.70" y="995.79" font-size="21.51" fill="#ececec" textLength="63.38" lengthAdjust="spacingAndGlyphs">273,101</text>
<text x="1762.60" y="995.79" font-size="21.51" fill="#ececec" textLength="63.38" lengthAdjust="spacingAndGlyphs">342,669</text>
<rect x="723" y="1004.62" width="15" height="33.3" fill="#2a2a2a" />
<rect x="738" y="1004.62" width="1105" height="33.3" fill="#444444" />
<text x="743.40" y="1029.02" font-size="21.22" fill="#f6f6f6" textLength="137.88" lengthAdjust="spacingAndGlyphs">Gamma Log/Log</text>
<text x="893.00" y="1029.02" font-size="21.51" fill="#f6f6f6" textLength="43.88" lengthAdjust="spacingAndGlyphs">1,397</text>
<text x="989.50" y="1029.02" font-size="21.51" fill="#f6f6f6" textLength="43.88" lengthAdjust="spacingAndGlyphs">2,203</text>
<text x="1075.40" y="1029.02" font-size="21.51" fill="#f6f6f6" textLength="43.88" lengthAdjust="spacingAndGlyphs">2,146</text>
<text x="1161.30" y="1029.02" font-size="21.51" fill="#f6f6f6" textLength="43.88" lengthAdjust="spacingAndGlyphs">2,148</text>
<text x="1247.20" y="1029.02" font-size="21.51" fill="#f6f6f6" textLength="43.88" lengthAdjust="spacingAndGlyphs">2,089</text>
<text x="1333.10" y="1029.02" font-size="21.51" fill="#f6f6f6" textLength="43.88" lengthAdjust="spacingAndGlyphs">2,059</text>
<text x="1419.00" y="1029.02" font-size="21.51" fill="#f6f6f6" textLength="43.88" lengthAdjust="spacingAndGlyphs">2,021</text>
<text x="1504.90" y="1029.02" font-size="21.51" fill="#f6f6f6" textLength="43.88" lengthAdjust="spacingAndGlyphs">1,955</text>
<text x="1590.80" y="1029.02" font-size="21.51" fill="#f6f6f6" textLength="43.88" lengthAdjust="spacingAndGlyphs">1,962</text>
<text x="1676.70" y="1029.02" font-size="21.51" fill="#f6f6f6" textLength="43.88" lengthAdjust="spacingAndGlyphs">2,054</text>
<text x="1762.60" y="1029.02" font-size="21.51" fill="#f6f6f6" textLength="43.88" lengthAdjust="spacingAndGlyphs">2,199</text>
<rect x="723" y="1037.85" width="15" height="33.3" fill="#2a2a2a" />
<rect x="738" y="1037.85" width="1105" height="33.3" fill="#7f7f7f" />
<text x="743.40" y="1062.25" font-size="21.22" fill="#ececec" textLength="31.60" lengthAdjust="spacingAndGlyphs">CCT</text>
<text x="893.00" y="1062.25" font-size="21.51" fill="#ececec" textLength="82.88" lengthAdjust="spacingAndGlyphs">22076,000</text>
<text x="989.50" y="1062.25" font-size="21.51" fill="#ececec" textLength="73.13" lengthAdjust="spacingAndGlyphs">6168,000</text>
<text x="1075.40" y="1062.25" font-size="21.51" fill="#ececec" textLength="73.13" lengthAdjust="spacingAndGlyphs">6654,000</text>
<text x="1161.30" y="1062.25" font-size="21.51" fill="#ececec" textLength="73.13" lengthAdjust="spacingAndGlyphs">6607,000</text>
<text x="1247.20" y="1062.25" font-size="21.51" fill="#ececec" textLength="73.13" lengthAdjust="spacingAndGlyphs">6650,000</text>
<text x="1333.10" y="1062.25" font-size="21.51" fill="#ececec" textLength="73.13" lengthAdjust="spacingAndGlyphs">6527,000</text>
<text x="1419.00" y="1062.25" font-size="21.51" fill="#ececec" textLength="73.13" lengthAdjust="spacingAndGlyphs">6487,000</text>
<text x="1504.90" y="1062.25" font-size="21.51" fill="#ececec" textLength="73.13" lengthAdjust="spacingAndGlyphs">6531,000</text>
<text x="1590.80" y="1062.25" font-size="21.51" fill="#ececec" textLength="73.13" lengthAdjust="spacingAndGlyphs">6557,000</text>
<text x="1676.70" y="1062.25" font-size="21.51" fill="#ececec" textLength="73.13" lengthAdjust="spacingAndGlyphs">6512,000</text>
<text x="1762.60" y="1062.25" font-size="21.51" fill="#ececec" textLength="73.13" lengthAdjust="spacingAndGlyphs">6476,000</text>
<rect x="723" y="1071.08" width="15" height="33.3" fill="#2a2a2a" />
<rect x="738" y="1071.08" width="1105" height="33.3" fill="#444444" />
<text x="743.40" y="1095.48" font-size="21.22" fill="#f6f6f6" textLength="66.90" lengthAdjust="spacingAndGlyphs">ΔE 2000</text>
<text x="893.00" y="1095.48" font-size="21.51" fill="#f6f6f6" textLength="43.88" lengthAdjust="spacingAndGlyphs">0,181</text>
<text x="989.50" y="1095.48" font-size="21.51" fill="#f6f6f6" textLength="43.88" lengthAdjust="spacingAndGlyphs">0,523</text>
<text x="1075.40" y="1095.48" font-size="21.51" fill="#f6f6f6" textLength="43.88" lengthAdjust="spacingAndGlyphs">0,849</text>
<text x="1161.30" y="1095.48" font-size="21.51" fill="#f6f6f6" textLength="43.88" lengthAdjust="spacingAndGlyphs">0,903</text>
<text x="1247.20" y="1095.48" font-size="21.51" fill="#f6f6f6" textLength="43.88" lengthAdjust="spacingAndGlyphs">2,102</text>
<text x="1333.10" y="1095.48" font-size="21.51" fill="#f6f6f6" textLength="43.88" lengthAdjust="spacingAndGlyphs">2,172</text>
<text x="1419.00" y="1095.48" font-size="21.51" fill="#f6f6f6" textLength="43.88" lengthAdjust="spacingAndGlyphs">2,048</text>
<text x="1504.90" y="1095.48" font-size="21.51" fill="#f6f6f6" textLength="43.88" lengthAdjust="spacingAndGlyphs">1,982</text>
<text x="1590.80" y="1095.48" font-size="21.51" fill="#f6f6f6" textLength="43.88" lengthAdjust="spacingAndGlyphs">1,241</text>
<text x="1676.70" y="1095.48" font-size="21.51" fill="#f6f6f6" textLength="43.88" lengthAdjust="spacingAndGlyphs">0,468</text>
<text x="1762.60" y="1095.48" font-size="21.51" fill="#f6f6f6" textLength="43.88" lengthAdjust="spacingAndGlyphs">0,241</text>
<rect x="1" y="1130" width="1918" height="54" fill="url(#bbar)" />
<rect x="1" y="1129.5" width="1918" height="1.5" fill="#242424" />
<rect x="1.7" y="1131.7" width="127" height="51.5" rx="3" fill="url(#bb)" stroke="#505050" stroke-width="0.8"/>
<rect x="2.7" y="1132.2" width="125" height="2" rx="1" fill="#b0b0b0" opacity="0.8"/>
<rect x="5.9" y="1136" width="118.6" height="30" rx="2.5" fill="#000000" stroke="#555" stroke-width="0.6"/>
<text x="62.94" y="1178.50" font-size="8.14" fill="#2e2e2e" textLength="4.53" lengthAdjust="spacingAndGlyphs">0</text>
<rect x="130.4" y="1131.7" width="127" height="51.5" rx="3" fill="url(#bb)" stroke="#505050" stroke-width="0.8"/>
<rect x="131.4" y="1132.2" width="125" height="2" rx="1" fill="#b0b0b0" opacity="0.8"/>
<rect x="134.6" y="1136" width="118.6" height="30" rx="2.5" fill="#1a1a1a" stroke="#555" stroke-width="0.6"/>
<text x="189.42" y="1178.50" font-size="8.14" fill="#2e2e2e" textLength="9.05" lengthAdjust="spacingAndGlyphs">10</text>
<rect x="259.2" y="1131.7" width="127" height="51.5" rx="3" fill="url(#bb)" stroke="#505050" stroke-width="0.8"/>
<rect x="260.2" y="1132.2" width="125" height="2" rx="1" fill="#b0b0b0" opacity="0.8"/>
<rect x="263.4" y="1136" width="118.6" height="30" rx="2.5" fill="#333333" stroke="#555" stroke-width="0.6"/>
<text x="318.17" y="1178.50" font-size="8.14" fill="#2e2e2e" textLength="9.05" lengthAdjust="spacingAndGlyphs">20</text>
<rect x="387.9" y="1131.7" width="127" height="51.5" rx="3" fill="url(#bb)" stroke="#505050" stroke-width="0.8"/>
<rect x="388.9" y="1132.2" width="125" height="2" rx="1" fill="#b0b0b0" opacity="0.8"/>
<rect x="392.1" y="1136" width="118.6" height="30" rx="2.5" fill="#4d4d4d" stroke="#555" stroke-width="0.6"/>
<text x="446.92" y="1178.50" font-size="8.14" fill="#2e2e2e" textLength="9.05" lengthAdjust="spacingAndGlyphs">30</text>
<rect x="516.7" y="1131.7" width="127" height="51.5" rx="3" fill="url(#bb)" stroke="#505050" stroke-width="0.8"/>
<rect x="517.7" y="1132.2" width="125" height="2" rx="1" fill="#b0b0b0" opacity="0.8"/>
<rect x="520.9" y="1136" width="118.6" height="30" rx="2.5" fill="#666666" stroke="#555" stroke-width="0.6"/>
<text x="575.67" y="1178.50" font-size="8.14" fill="#2e2e2e" textLength="9.05" lengthAdjust="spacingAndGlyphs">40</text>
<rect x="645.5" y="1131.7" width="127" height="51.5" rx="3" fill="url(#bb)" stroke="#505050" stroke-width="0.8"/>
<rect x="646.5" y="1132.2" width="125" height="2" rx="1" fill="#b0b0b0" opacity="0.8"/>
<rect x="649.7" y="1136" width="118.6" height="30" rx="2.5" fill="#808080" stroke="#555" stroke-width="0.6"/>
<text x="704.42" y="1178.50" font-size="8.14" fill="#2e2e2e" textLength="9.05" lengthAdjust="spacingAndGlyphs">50</text>
<rect x="774.2" y="1131.7" width="127" height="51.5" rx="3" fill="url(#bb)" stroke="#505050" stroke-width="0.8"/>
<rect x="775.2" y="1132.2" width="125" height="2" rx="1" fill="#b0b0b0" opacity="0.8"/>
<rect x="778.4" y="1136" width="118.6" height="30" rx="2.5" fill="#999999" stroke="#555" stroke-width="0.6"/>
<text x="833.17" y="1178.50" font-size="8.14" fill="#2e2e2e" textLength="9.05" lengthAdjust="spacingAndGlyphs">60</text>
<rect x="903.0" y="1131.7" width="127" height="51.5" rx="3" fill="url(#bb)" stroke="#505050" stroke-width="0.8"/>
<rect x="904.0" y="1132.2" width="125" height="2" rx="1" fill="#b0b0b0" opacity="0.8"/>
<rect x="907.2" y="1136" width="118.6" height="30" rx="2.5" fill="#b3b3b3" stroke="#555" stroke-width="0.6"/>
<text x="961.92" y="1178.50" font-size="8.14" fill="#2e2e2e" textLength="9.05" lengthAdjust="spacingAndGlyphs">70</text>
<rect x="1031.7" y="1131.7" width="127" height="51.5" rx="3" fill="url(#bb)" stroke="#505050" stroke-width="0.8"/>
<rect x="1032.7" y="1132.2" width="125" height="2" rx="1" fill="#b0b0b0" opacity="0.8"/>
<rect x="1035.9" y="1136" width="118.6" height="30" rx="2.5" fill="#cccccc" stroke="#555" stroke-width="0.6"/>
<text x="1090.67" y="1178.50" font-size="8.14" fill="#2e2e2e" textLength="9.05" lengthAdjust="spacingAndGlyphs">80</text>
<rect x="1160.5" y="1131.7" width="127" height="51.5" rx="3" fill="url(#bb)" stroke="#505050" stroke-width="0.8"/>
<rect x="1161.5" y="1132.2" width="125" height="2" rx="1" fill="#b0b0b0" opacity="0.8"/>
<rect x="1164.7" y="1136" width="118.6" height="30" rx="2.5" fill="#e6e6e6" stroke="#555" stroke-width="0.6"/>
<text x="1219.42" y="1178.50" font-size="8.14" fill="#2e2e2e" textLength="9.05" lengthAdjust="spacingAndGlyphs">90</text>
<rect x="1289.8" y="1132.2" width="126" height="51" rx="3" fill="url(#bbsel)" stroke="#181818" stroke-width="1.5"/>
<rect x="1293.8" y="1135.9" width="118.2" height="30.7" rx="2.5" fill="#ffffff"/>
<text x="1344.40" y="1178.90" font-size="10.03" fill="#f4f4f4" font-weight="bold" textLength="15.81" lengthAdjust="spacingAndGlyphs">100</text>
<rect x="1646" y="1131.5" width="40.5" height="52.5" rx="2.5" fill="url(#tb)" stroke="#555" stroke-width="0.8"/>
<line x1="1646" y1="1147" x2="1686.4" y2="1147" stroke="#505050" stroke-width="1" />
<circle cx="1666" cy="1139.5" r="6" fill="url(#tcirc)"/>
<path d="M1661.5 1141.5 L1666 1137 L1670.5 1141.5 Z" fill="#2a2a2a"/>
<rect x="1653.5" y="1152.5" width="25" height="25" rx="2.5" fill="#cfcfcf" stroke="#262626" stroke-width="1.8"/>
<rect x="1659.8" y="1159.8" width="12.5" height="12.5" fill="#111"/>
<rect x="1686.5" y="1131.5" width="192" height="25.5" rx="2" fill="url(#tb)" stroke="#555" stroke-width="0.8"/>
<line x1="1724.9" y1="1132" x2="1724.9" y2="1157" stroke="#555" stroke-width="1" />
<line x1="1763.3" y1="1132" x2="1763.3" y2="1157" stroke="#555" stroke-width="1" />
<line x1="1801.7" y1="1132" x2="1801.7" y2="1157" stroke="#555" stroke-width="1" />
<line x1="1840.1" y1="1132" x2="1840.1" y2="1157" stroke="#555" stroke-width="1" />
<circle cx="1705.7" cy="1144.2" r="7.8" fill="url(#tcirc)"/>
<circle cx="1744.1" cy="1144.2" r="7.8" fill="url(#tcirc)"/>
<circle cx="1782.5" cy="1144.2" r="7.8" fill="url(#tcirc)"/>
<circle cx="1820.9" cy="1144.2" r="7.8" fill="url(#tcirc)"/>
<circle cx="1859.3" cy="1144.2" r="7.8" fill="url(#tcirc)"/>
<rect x="1702.4" y="1140.9" width="6.6" height="6.6" fill="#2a2a2a"/>
<path d="M1741.1 1139.5 L1748.6 1144.2 L1741.1 1149 Z" fill="#222"/>
<path d="M1778.5 1139.5 h-1.8 v9.5 h1.8 M1786.5 1139.5 h1.8 v9.5 h-1.8" fill="none" stroke="#2a2a2a" stroke-width="1.5"/>
<circle cx="1781.0" cy="1144.3" r="0.9" fill="#2a2a2a"/><circle cx="1784.0" cy="1144.3" r="0.9" fill="#2a2a2a"/>
<path d="M1820.9 1144.2 C1818.9 1141.5 1814.4 1141.5 1814.4 1144.2 C1814.4 1147 1818.9 1147 1820.9 1144.2 C1822.9 1141.5 1827.4 1141.5 1827.4 1144.2 C1827.4 1147 1822.9 1147 1820.9 1144.2 Z" fill="none" stroke="#2a2a2a" stroke-width="1.6"/>
<path d="M1863.5 1142 A4.6 4.6 0 0 0 1854.9 1143.2 M1855.1 1146.5 A4.6 4.6 0 0 0 1863.7 1145.3" fill="none" stroke="#2a2a2a" stroke-width="1.8"/>
<path d="M1864.8 1139.5 v4 h-4 Z M1853.8 1149 v-4 h4 Z" fill="#2a2a2a"/>
<rect x="1878.5" y="1131.5" width="39.5" height="25.5" fill="#2a2a2a" />
<circle cx="1898.5" cy="1144.2" r="8.5" fill="#222"/>
<rect x="1687" y="1158.3" width="115.3" height="26" rx="2" fill="url(#tb)" stroke="#555" stroke-width="0.8"/>
<rect x="1802.3" y="1158.3" width="115.7" height="26" rx="2" fill="url(#tb)" stroke="#555" stroke-width="0.8"/>
<circle cx="1713" cy="1170.5" r="8" fill="url(#tcirc)"/>
<circle cx="1894" cy="1170.5" r="8" fill="url(#tcirc)"/>
<path d="M1712 1166.5 l-3.5 4 l3.5 4 M1716 1166.5 l-3.5 4 l3.5 4" fill="none" stroke="#2a2a2a" stroke-width="1.3"/>
<path d="M1892 1166.5 l3.5 4 l-3.5 4 M1896 1166.5 l3.5 4 l-3.5 4" fill="none" stroke="#2a2a2a" stroke-width="1.3"/>
<text x="1736.30" y="1176.80" font-size="18.60" fill="#2a2a2a" font-weight="bold" textLength="42.17" lengthAdjust="spacingAndGlyphs">Back</text>
<text x="1826.70" y="1176.80" font-size="18.60" fill="#2a2a2a" font-weight="bold" textLength="43.00" lengthAdjust="spacingAndGlyphs">Next</text>
</svg>

</body></html>
